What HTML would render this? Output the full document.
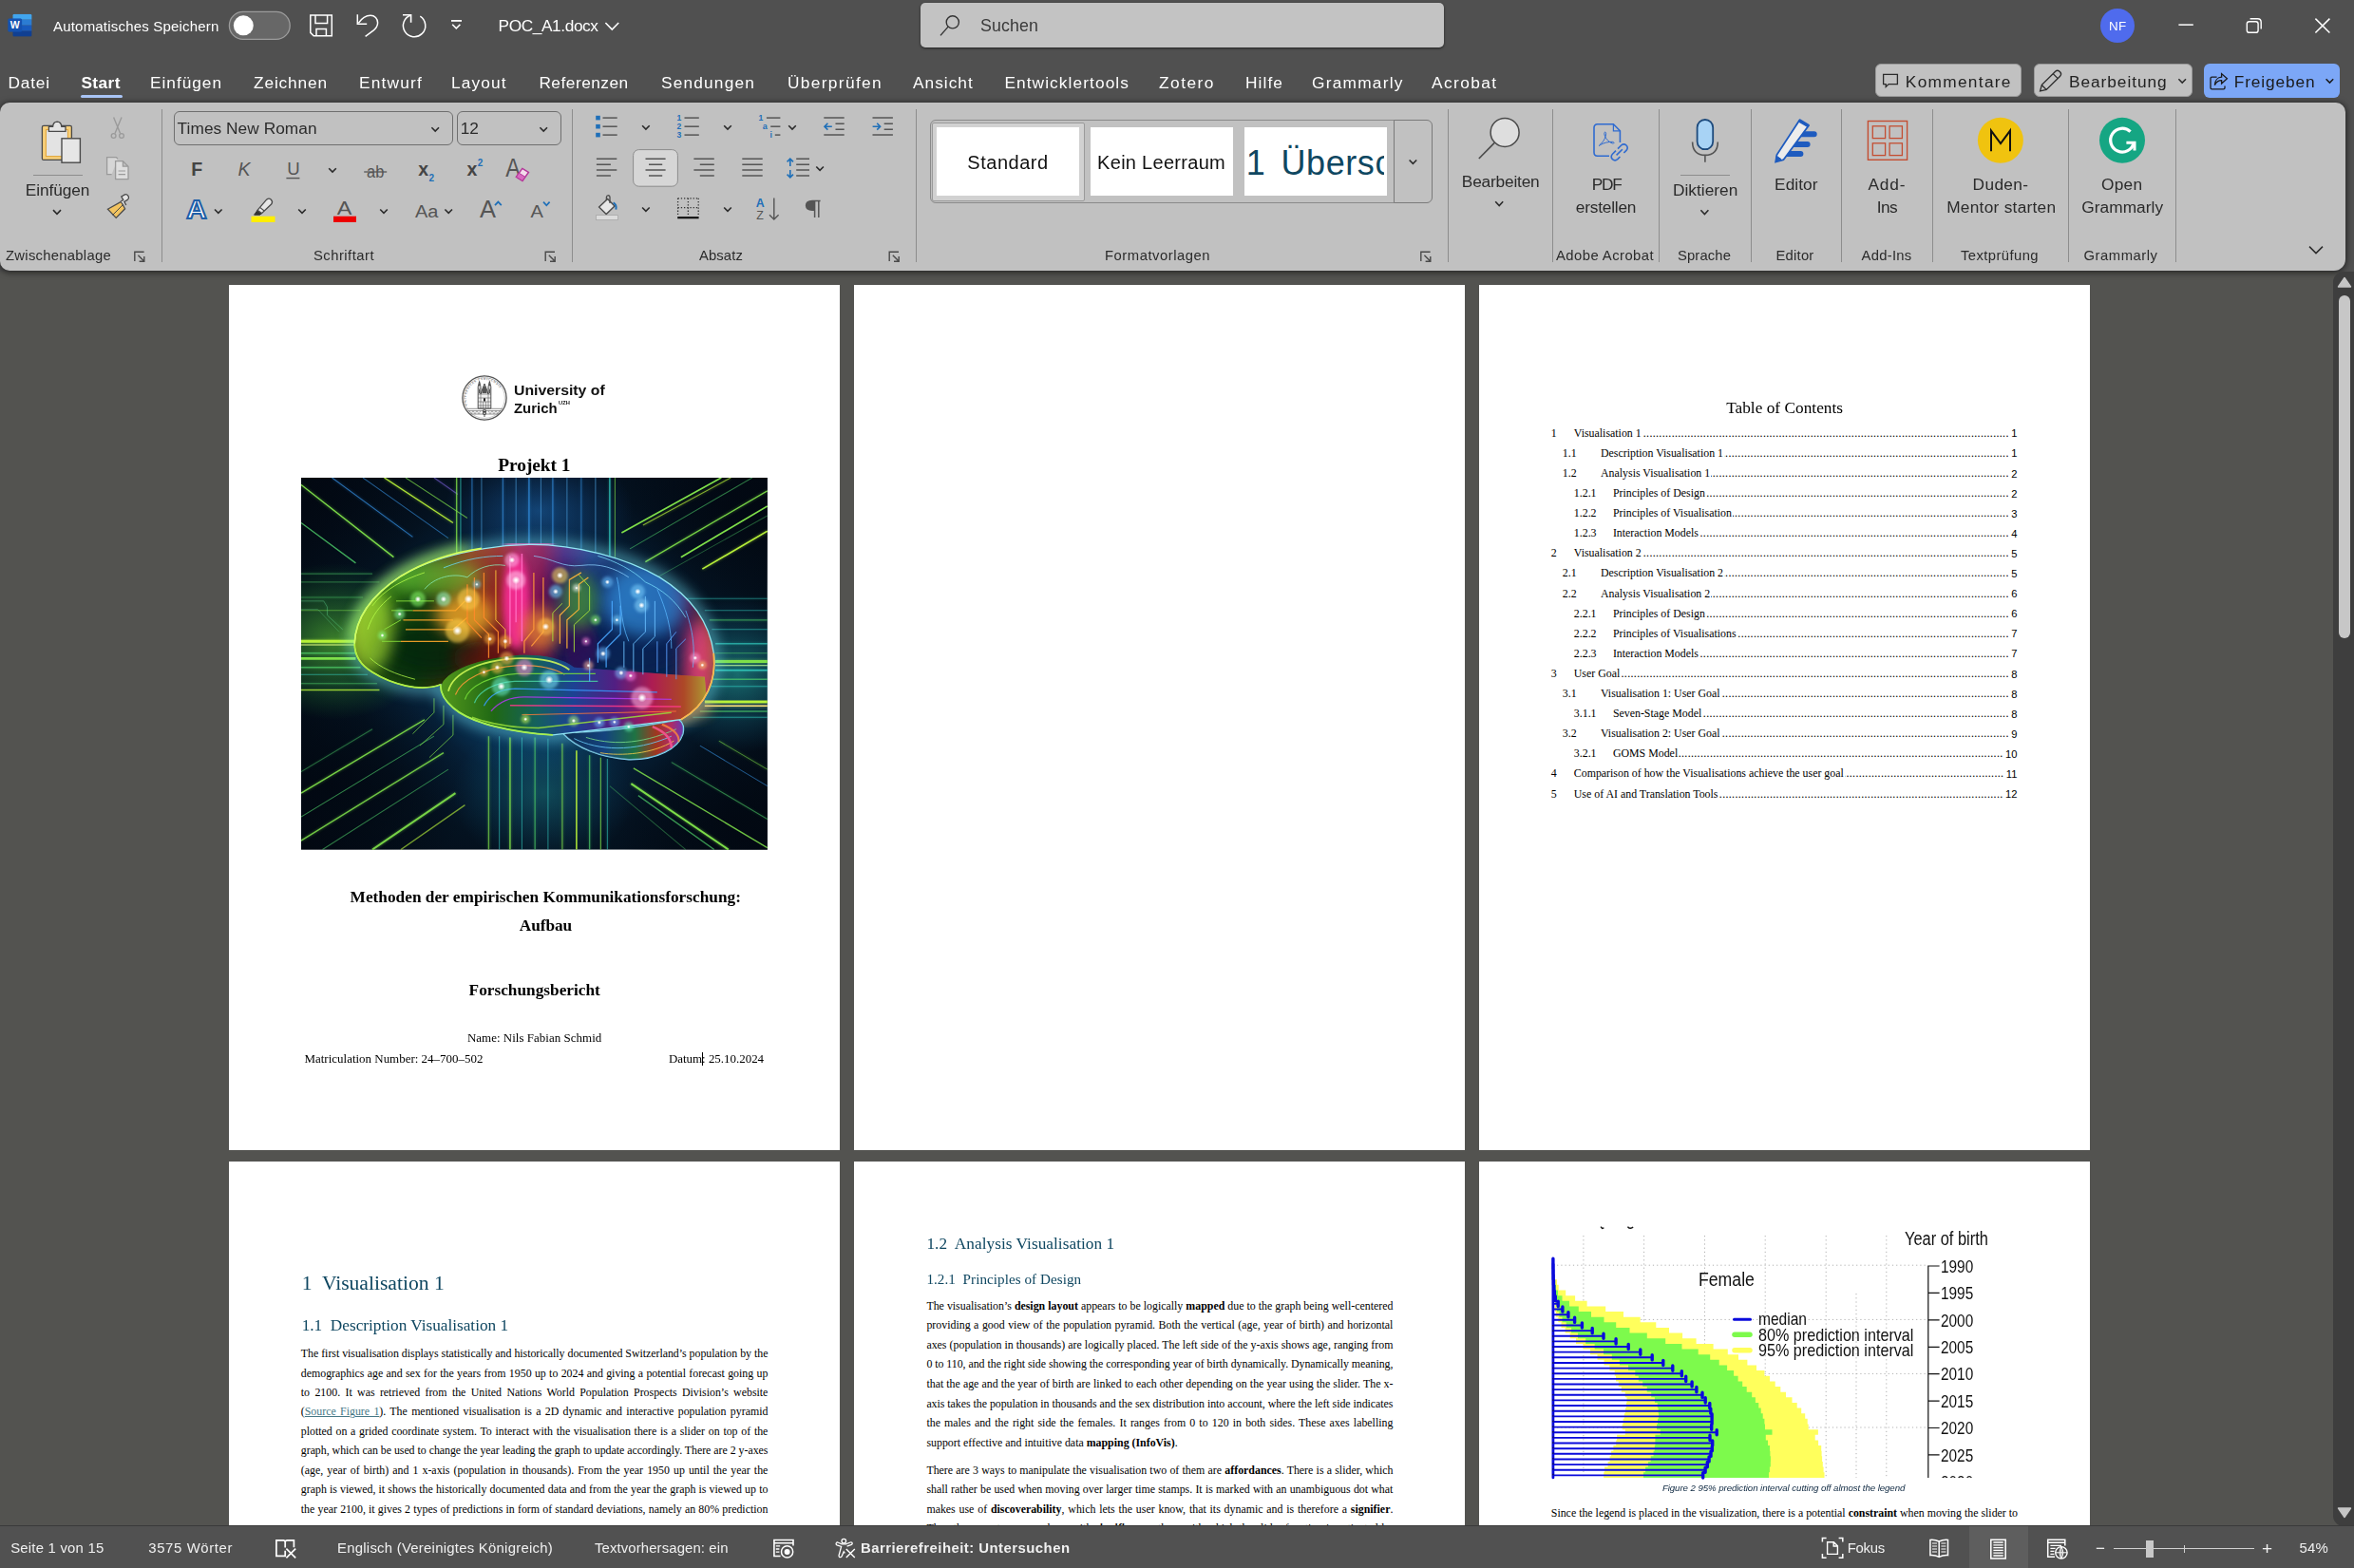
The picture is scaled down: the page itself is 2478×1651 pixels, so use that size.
<!DOCTYPE html><html><head><meta charset="utf-8"><title>POC_A1.docx - Word</title><style>

html,body{margin:0;padding:0;}
body{width:2478px;height:1651px;overflow:hidden;position:relative;background:#535350;font-family:"Liberation Sans",sans-serif;}
.a{position:absolute;}
.t{position:absolute;white-space:pre;line-height:1;}
.pg{position:absolute;background:#fff;overflow:hidden;}
.ln{position:absolute;white-space:nowrap;font-family:"Liberation Serif",serif;color:#000;line-height:1;text-align:justify;text-align-last:justify;}

</style></head><body>
<div class="a" style="left:0px;top:0px;width:2478px;height:286px;background:#505050;"></div>
<div class="a" style="left:0px;top:108px;width:2469px;height:177px;background:#c1c1c1;border-radius:10px 10px 12px 10px;box-shadow:0 1px 6px 1px rgba(0,0,0,.55);"></div>
<div class="a" style="left:968.8px;top:3.2px;width:551.6px;height:47.2px;background:#c3c3c3;border-radius:5px;box-shadow:0 1px 2.5px rgba(0,0,0,.6);"></div>
<div class="a" style="left:2211px;top:8.8px;width:36.2px;height:36.2px;background:#4f6bed;border-radius:50%;"></div>
<div class="a" style="left:85.4px;top:100.3px;width:43.2px;height:3px;background:#a9c4f5;border-radius:1.5px;"></div>
<div class="a" style="left:1974.3px;top:67.3px;width:153.4px;height:35.2px;background:#c1c1c1;border-radius:6px;border:1px solid #9a9a9a;box-sizing:border-box;"></div>
<div class="a" style="left:2140.5px;top:67.3px;width:167.2px;height:35.2px;background:#c1c1c1;border-radius:6px;border:1px solid #9a9a9a;box-sizing:border-box;"></div>
<div class="a" style="left:2320.3px;top:67px;width:143px;height:35.8px;background:#7ca7f7;border-radius:6px;"></div>
<div class="a" style="left:170.0px;top:115px;width:1px;height:161px;background:#8d8d8d;"></div>
<div class="a" style="left:601.5px;top:115px;width:1px;height:161px;background:#8d8d8d;"></div>
<div class="a" style="left:963.5px;top:115px;width:1px;height:161px;background:#8d8d8d;"></div>
<div class="a" style="left:1524.0px;top:115px;width:1px;height:161px;background:#8d8d8d;"></div>
<div class="a" style="left:1633.9px;top:115px;width:1px;height:161px;background:#8d8d8d;"></div>
<div class="a" style="left:1746.0px;top:115px;width:1px;height:161px;background:#8d8d8d;"></div>
<div class="a" style="left:1842.5px;top:115px;width:1px;height:161px;background:#8d8d8d;"></div>
<div class="a" style="left:1937.9px;top:115px;width:1px;height:161px;background:#8d8d8d;"></div>
<div class="a" style="left:2034.1px;top:115px;width:1px;height:161px;background:#8d8d8d;"></div>
<div class="a" style="left:2177.2px;top:115px;width:1px;height:161px;background:#8d8d8d;"></div>
<div class="a" style="left:2289.5px;top:115px;width:1px;height:161px;background:#8d8d8d;"></div>
<div class="a" style="left:35px;top:183.5px;width:52px;height:1px;background:#8d8d8d;"></div>
<div class="a" style="left:182.8px;top:117px;width:294px;height:35.8px;border:1px solid #6f6f6f;border-radius:6px;box-sizing:border-box;"></div>
<div class="a" style="left:480.5px;top:117px;width:110.5px;height:35.8px;border:1px solid #6f6f6f;border-radius:6px;box-sizing:border-box;"></div>
<div class="a" style="left:1769px;top:183.9px;width:51.8px;height:1px;background:#8d8d8d;"></div>
<div class="a" style="left:979px;top:125.6px;width:489px;height:88.7px;border:1px solid #8a8a8a;border-radius:6px 0 0 6px;box-sizing:border-box;"></div>
<div class="a" style="left:1467.2px;top:125.6px;width:41px;height:88.7px;border:1px solid #7a7a7a;border-radius:0 6px 6px 0;box-sizing:border-box;"></div>
<div class="a" style="left:980.7px;top:128.7px;width:161.1px;height:83.3px;background:#d1d1d1;border:1px solid #9a9a9a;border-radius:2px;box-sizing:border-box;"></div>
<div class="a" style="left:986.2px;top:134.2px;width:149.8px;height:72px;background:#fff;"></div>
<div class="a" style="left:1147.9px;top:134.2px;width:150.4px;height:72px;background:#fff;"></div>
<div class="a" style="left:1310.2px;top:134.2px;width:149.8px;height:72px;background:#fff;"></div>
<div class="a" style="left:1310.2px;top:134.2px;width:146.5px;height:71.3px;overflow:hidden;"><span class="t" style='left:1.6px;top:19.8px;font-family:"Liberation Sans",sans-serif;font-size:36px;color:#0f4761;letter-spacing:0.6px;word-spacing:-2.6px;'>1&nbsp; Überschrift</span></div>
<svg class="a" style="left:0;top:0;" width="2478" height="286" viewBox="0 0 2478 286"><defs><clipPath id="wpg"><rect x="13.3" y="14.7" width="20.3" height="23.8" rx="1.6"/></clipPath></defs><g clip-path="url(#wpg)"><rect x="13.3" y="14.7" width="20.3" height="6" fill="#41a5ee"/><rect x="13.3" y="20.7" width="20.3" height="6" fill="#2b7cd3"/><rect x="13.3" y="26.7" width="20.3" height="6" fill="#185abd"/><rect x="13.3" y="32.7" width="20.3" height="6" fill="#103f91"/></g><rect x="8.4" y="19.6" width="14.7" height="14" rx="1.5" fill="#185abd"/><rect x="8.4" y="19.6" width="14.7" height="14" rx="1.5" fill="#0a3a8a" opacity=".25"/><text x="15.75" y="30.4" font-family="Liberation Sans, sans-serif" font-size="10.5" fill="#fff" font-weight="700" font-style="normal" text-anchor="middle" >W</text><rect x="241.4" y="12.4" width="63.8" height="29" rx="14.5" fill="#676767" stroke="#9c9c9c" stroke-width="1.3"/><circle cx="256.3" cy="26.8" r="10.5" fill="#fff"/><path d="M326.8 16H349.3V37.8H330.2L326.8 34.4Z M332 16V24.6H344.6V16 M333 37.8V30.6H343.4V37.8" stroke="#fff" stroke-width="1.5" fill="none" /><path d="M376.3 15.3V25.2H386.2" stroke="#fff" stroke-width="1.5" fill="none" /><path d="M377.3 24.4C381 18.8 386 16.2 390 16.2C394.5 16.2 397.6 19.6 397.6 24C397.6 27.6 395.6 30 393 32.2L384.6 38.3" stroke="#fff" stroke-width="1.5" fill="none" /><path d="M424 15.7H432.6V23.8" stroke="#fff" stroke-width="1.6" fill="none" /><path d="M442.3 17.2A11.66 11.66 0 1 1 432.5 16" stroke="#fff" stroke-width="1.5" fill="none" /><path d="M475 21.9H486" stroke="#fff" stroke-width="1.8" fill="none" /><path d="M476.2 25.7L480.3 29.8L484.4 25.7" stroke="#fff" stroke-width="1.6" fill="none" /><path d="M637.4 24L644.3 31L651.2 24" stroke="#fff" stroke-width="1.6" fill="none" /><path d="M998.1 28.1L990 37.4" stroke="#333" stroke-width="1.4" fill="none" /><circle cx="1002.8" cy="23.3" r="6.6" fill="none" stroke="#333" stroke-width="1.4"/><path d="M2293.4 26.1H2308.8" stroke="#fff" stroke-width="1.5" fill="none" /><rect x="2365.3" y="22.7" width="11.8" height="11.6" rx="2.4" fill="none" stroke="#fff" stroke-width="1.4"/><path d="M2368.6 19.7H2376.6Q2380.2 19.7 2380.2 23.3V30.6" stroke="#fff" stroke-width="1.4" fill="none" /><path d="M2437.4 19.6L2452.4 34.5M2452.4 19.6L2437.4 34.5" stroke="#fff" stroke-width="1.5" fill="none" /><path d="M1982.6 78.3H1997.4V88.6H1988.2L1985.2 91.4V88.6H1982.6Z" stroke="#2b2b2b" stroke-width="1.3" fill="none" /><path d="M2147.6 95.8L2149.4 89.4L2163.6 75.2Q2165.8 73.2 2168 75.2L2168.8 76Q2170.6 78.2 2168.6 80.2L2154.2 94.4Z M2161.2 77.6L2166.2 82.6 M2149.4 89.6L2154 94.2" stroke="#2b2b2b" stroke-width="1.3" fill="none" /><path d="M2293.3999999999996 83.3L2297.2 87.10000000000001L2301.0 83.3" stroke="#2b2b2b" stroke-width="1.5" fill="none" /><path d="M2333.6 81.2H2328.4Q2327 81.2 2327 82.6V92.4Q2327 93.8 2328.4 93.8H2340.6Q2342 93.8 2342 92.4V90.6 M2331.4 89.6C2331.6 84.6 2334.6 81.4 2338.6 81.2V77.6L2344.4 82.8L2338.6 88V84.6C2335.6 84.6 2333 86.2 2331.4 89.6Z" stroke="#1a1a1a" stroke-width="1.3" fill="none" /><path d="M2448.6 83.3L2452.4 87.10000000000001L2456.2000000000003 83.3" stroke="#1a1a1a" stroke-width="1.5" fill="none" /><rect x="44.4" y="132.4" width="31" height="36" rx="1.5" fill="#f7cf7a" stroke="#4a4a4a" stroke-width="1.3"/><rect x="48.4" y="136.6" width="23" height="28" fill="#e3e3e3" stroke="#e0a436" stroke-width="1"/><path d="M51.4 138.4V133.4H55.6Q56 128.4 60.2 128.2Q64.4 128.4 64.8 133.4H69V138.4Z" stroke="#4a4a4a" stroke-width="1.3" fill="#e3e3e3" /><rect x="65" y="145.8" width="19.4" height="25.4" fill="#e6e6e6" stroke="#4a4a4a" stroke-width="1.4"/><path d="M56 221.1L60 225.29999999999998L64 221.1" stroke="#2b2b2b" stroke-width="1.6" fill="none" /><path d="M119.6 123.6L126.6 140.6M128 123.6L121 140.6" stroke="#9a9a9a" stroke-width="1.4" fill="none" /><circle cx="119.6" cy="143" r="2.4" fill="none" stroke="#9a9a9a" stroke-width="1.3"/><circle cx="128" cy="143" r="2.4" fill="none" stroke="#9a9a9a" stroke-width="1.3"/><path d="M117.6 183.6H112.6V165.6H122.4L124 167.2" stroke="#9a9a9a" stroke-width="1.3" fill="#d6d6d6" /><path d="M121.6 169.6H129.4L135 175.2V188.6H121.6Z M129.4 169.6V175.2H135" stroke="#9a9a9a" stroke-width="1.3" fill="#dedede" /><path d="M124.6 180H132M124.6 183.6H132" stroke="#9a9a9a" stroke-width="1.2" fill="none" /><path d="M113.4 220.2L127.4 212.4L131.6 219.8L122.2 229.4Z" stroke="#4a4a4a" stroke-width="1.3" fill="#f3c460" /><path d="M118.6 226.4L129.4 215.6" stroke="#4a4a4a" stroke-width="1" fill="none" /><path d="M127 212.2L129.8 210.6L127.8 207L131.4 204.9Q133.4 204 134.6 205.8L135.4 207.3Q136 209.4 134.2 210.4L130.8 212.4L132.8 216" stroke="#4a4a4a" stroke-width="1.3" fill="#e3e3e3" /><path d="M151.6 265.2H141.8V275.0" stroke="#4a4a4a" stroke-width="1.4" fill="none" /><path d="M145.4 268.79999999999995L151.4 274.79999999999995M151.8 270.0V275.2H146.6" stroke="#4a4a4a" stroke-width="1.4" fill="none" /><path d="M584.0 265.2H574.1999999999999V275.0" stroke="#4a4a4a" stroke-width="1.4" fill="none" /><path d="M577.8 268.79999999999995L583.8 274.79999999999995M584.1999999999999 270.0V275.2H579.0" stroke="#4a4a4a" stroke-width="1.4" fill="none" /><path d="M946.0 265.2H936.1999999999999V275.0" stroke="#4a4a4a" stroke-width="1.4" fill="none" /><path d="M939.8 268.79999999999995L945.8 274.79999999999995M946.1999999999999 270.0V275.2H941.0" stroke="#4a4a4a" stroke-width="1.4" fill="none" /><path d="M1505.6 265.2H1495.8V275.0" stroke="#4a4a4a" stroke-width="1.4" fill="none" /><path d="M1499.4 268.79999999999995L1505.4 274.79999999999995M1505.8 270.0V275.2H1500.6" stroke="#4a4a4a" stroke-width="1.4" fill="none" /><path d="M454.4 134.29999999999998L458.2 138.1L462.0 134.29999999999998" stroke="#2b2b2b" stroke-width="1.6" fill="none" /><path d="M568.4000000000001 134.29999999999998L572.2 138.1L576.0 134.29999999999998" stroke="#2b2b2b" stroke-width="1.6" fill="none" /><text x="201.3" y="184.8" font-family="Liberation Sans, sans-serif" font-size="19.6" fill="#444" font-weight="700" font-style="normal" text-anchor="start" >F</text><text x="250.6" y="184.8" font-family="Liberation Sans, sans-serif" font-size="19.6" fill="#555" font-weight="400" font-style="italic" text-anchor="start" >K</text><text x="302.2" y="184.4" font-family="Liberation Sans, sans-serif" font-size="18.6" fill="#555" font-weight="400" font-style="normal" text-anchor="start" >U</text><path d="M301.4 187.6H315.4" stroke="#555" stroke-width="1.4" fill="none" /><path d="M346.2 177.29999999999998L350 181.1L353.8 177.29999999999998" stroke="#2b2b2b" stroke-width="1.6" fill="none" /><text x="386" y="187" font-family="Liberation Sans, sans-serif" font-size="17.5" fill="#555" font-weight="400" font-style="normal" text-anchor="start" textLength="18.3" lengthAdjust="spacingAndGlyphs">ab</text><path d="M383.2 181H407.2" stroke="#555" stroke-width="1.3" fill="none" /><text x="440.2" y="184.8" font-family="Liberation Sans, sans-serif" font-size="19.5" fill="#444" font-weight="700" font-style="normal" text-anchor="start" >x</text><text x="451.4" y="191.4" font-family="Liberation Sans, sans-serif" font-size="10" fill="#1e6fb8" font-weight="700" font-style="normal" text-anchor="start" >2</text><text x="491.4" y="184.8" font-family="Liberation Sans, sans-serif" font-size="19.5" fill="#444" font-weight="700" font-style="normal" text-anchor="start" >x</text><text x="502.8" y="174.8" font-family="Liberation Sans, sans-serif" font-size="10" fill="#1e6fb8" font-weight="700" font-style="normal" text-anchor="start" >2</text><text x="532.2" y="186.4" font-family="Liberation Sans, sans-serif" font-size="27" fill="#555" font-weight="400" font-style="normal" text-anchor="start" textLength="15.6" lengthAdjust="spacingAndGlyphs">A</text><path d="M549.8 177.4L556.4 181.4L550 190.4L543.4 186.4Z" stroke="#b4379a" stroke-width="1.5" fill="#f4dcec" /><path d="M546.2 182.2L552.8 186.2L550 190.4L543.4 186.4Z" stroke="#b4379a" stroke-width="1" fill="#d86ac0" /><text x="196.2" y="230.4" font-family="Liberation Sans, sans-serif" font-size="27" font-weight="700" fill="#fff" stroke="#1f5fa8" stroke-width="1.9" textLength="21.4" lengthAdjust="spacingAndGlyphs">A</text><path d="M226.0 220.5L229.8 224.3L233.60000000000002 220.5" stroke="#2b2b2b" stroke-width="1.6" fill="none" /><path d="M267.6 226.2L271 221.4L275.4 224.6L273.6 226.2Z" stroke="#333" stroke-width="1" fill="#333" /><path d="M271 221.4L280.6 210.2Q283 208 285.4 210.2Q287.6 212.6 285.6 215L275.4 224.6Z" stroke="#4a4a4a" stroke-width="1.3" fill="#e6e6e6" /><path d="M273.6 218.4L278.2 222" stroke="#4a4a4a" stroke-width="1.1" fill="none" /><rect x="264.5" y="227.7" width="25" height="6.2" fill="#ffef00"/><path d="M314.2 220.5L318 224.3L321.8 220.5" stroke="#2b2b2b" stroke-width="1.6" fill="none" /><text x="354.8" y="226" font-family="Liberation Sans, sans-serif" font-size="21" fill="#555" font-weight="400" font-style="normal" text-anchor="start" textLength="15.6" lengthAdjust="spacingAndGlyphs">A</text><rect x="351" y="227.7" width="24" height="6.2" fill="#ee0000"/><path d="M400.2 220.5L404 224.3L407.8 220.5" stroke="#2b2b2b" stroke-width="1.6" fill="none" /><text x="437" y="229" font-family="Liberation Sans, sans-serif" font-size="18.8" fill="#555" font-weight="400" font-style="normal" text-anchor="start" textLength="24.4" lengthAdjust="spacingAndGlyphs">Aa</text><path d="M468.4 220.5L472.2 224.3L476.0 220.5" stroke="#2b2b2b" stroke-width="1.6" fill="none" /><text x="505" y="229" font-family="Liberation Sans, sans-serif" font-size="25.2" fill="#555" font-weight="400" font-style="normal" text-anchor="start" textLength="17" lengthAdjust="spacingAndGlyphs">A</text><path d="M521 216.2L524.4 212.6L527.8 216.2" stroke="#1e6fb8" stroke-width="1.7" fill="none" /><text x="558.6" y="229" font-family="Liberation Sans, sans-serif" font-size="18.8" fill="#555" font-weight="400" font-style="normal" text-anchor="start" textLength="13.4" lengthAdjust="spacingAndGlyphs">A</text><path d="M572 212.6L575.3 216.2L578.6 212.6" stroke="#1e6fb8" stroke-width="1.7" fill="none" /><rect x="627.2" y="121.8" width="4.6" height="4.6" fill="#1e6fb8"/><path d="M634.5 124.1H649.7" stroke="#555" stroke-width="1.5" fill="none" /><path d="M720.5 124.1H735.8" stroke="#555" stroke-width="1.5" fill="none" /><rect x="627.2" y="130.89999999999998" width="4.6" height="4.6" fill="#1e6fb8"/><path d="M634.5 133.2H649.7" stroke="#555" stroke-width="1.5" fill="none" /><path d="M720.5 133.2H735.8" stroke="#555" stroke-width="1.5" fill="none" /><rect x="627.2" y="139.79999999999998" width="4.6" height="4.6" fill="#1e6fb8"/><path d="M634.5 142.1H649.7" stroke="#555" stroke-width="1.5" fill="none" /><path d="M720.5 142.1H735.8" stroke="#555" stroke-width="1.5" fill="none" /><path d="M676.1 132.29999999999998L679.9 136.1L683.6999999999999 132.29999999999998" stroke="#2b2b2b" stroke-width="1.6" fill="none" /><text x="712.6" y="127.19999999999999" font-family="Liberation Sans, sans-serif" font-size="8.6" fill="#1e6fb8" font-weight="700" font-style="normal" text-anchor="start" >1</text><text x="712.6" y="136.29999999999998" font-family="Liberation Sans, sans-serif" font-size="8.6" fill="#1e6fb8" font-weight="700" font-style="normal" text-anchor="start" >2</text><text x="712.6" y="145.2" font-family="Liberation Sans, sans-serif" font-size="8.6" fill="#1e6fb8" font-weight="700" font-style="normal" text-anchor="start" >3</text><path d="M762.2 132.29999999999998L766 136.1L769.8 132.29999999999998" stroke="#2b2b2b" stroke-width="1.6" fill="none" /><text x="798.6" y="127.2" font-family="Liberation Sans, sans-serif" font-size="8.6" fill="#1e6fb8" font-weight="700" font-style="normal" text-anchor="start" >1</text><path d="M806.9 124.1H821.4" stroke="#555" stroke-width="1.5" fill="none" /><text x="802.8" y="136.4" font-family="Liberation Sans, sans-serif" font-size="9" fill="#1e6fb8" font-weight="700" font-style="normal" text-anchor="start" >a</text><path d="M811.2 133.2H821.4" stroke="#555" stroke-width="1.5" fill="none" /><text x="810.6" y="145.4" font-family="Liberation Sans, sans-serif" font-size="8.6" fill="#1e6fb8" font-weight="700" font-style="normal" text-anchor="start" >i</text><path d="M815.8 142.1H821.4" stroke="#555" stroke-width="1.5" fill="none" /><path d="M830.2 132.29999999999998L834 136.1L837.8 132.29999999999998" stroke="#2b2b2b" stroke-width="1.6" fill="none" /><path d="M867.3 124.1H888.7M867.3 142.1H888.7M879.5 130.3H888.7M879.5 136.2H888.7" stroke="#555" stroke-width="1.5" fill="none" /><path d="M875.8 133.2H868M871.4 129.8L868 133.2L871.4 136.6" stroke="#1e6fb8" stroke-width="1.6" fill="none" /><path d="M918.5 124.1H939.9M918.5 142.1H939.9M930.7 130.3H939.9M930.7 136.2H939.9" stroke="#555" stroke-width="1.5" fill="none" /><path d="M918.6 133.2H926.6M923.2 129.8L926.6 133.2L923.2 136.6" stroke="#1e6fb8" stroke-width="1.6" fill="none" /><path d="M627.9 167.3H649.3M627.9 173.2H642.9M627.9 179.1H649.3M627.9 184.9H642.9" stroke="#555" stroke-width="1.5" fill="none" /><rect x="666.6" y="157.6" width="46.8" height="38.6" rx="6" fill="#d6d6d6" stroke="#8c8c8c" stroke-width="1"/><path d="M679.5 167.3H700.6M683 173.2H697.2M679.5 179.1H700.6M683 184.9H697.2" stroke="#555" stroke-width="1.5" fill="none" /><path d="M730.4 167.3H751.8M736.8 173.2H751.8M730.4 179.1H751.8M736.8 184.9H751.8" stroke="#555" stroke-width="1.5" fill="none" /><path d="M781.3 167.3H802.7M781.3 173.2H802.7M781.3 179.1H802.7M781.3 184.9H802.7" stroke="#555" stroke-width="1.5" fill="none" /><path d="M838.2 167.3H852M838.2 173.2H852M838.2 179.1H852M838.2 184.9H852" stroke="#555" stroke-width="1.5" fill="none" /><path d="M831.8 167.4V175M828.6 170.4L831.8 167.2L835 170.4M831.8 179V186.8M828.6 183.6L831.8 186.8L835 183.6" stroke="#1e6fb8" stroke-width="1.6" fill="none" /><path d="M859.3000000000001 175.5L863.1 179.3L866.9 175.5" stroke="#2b2b2b" stroke-width="1.6" fill="none" /><path d="M630.6 218L639.6 209.4L647 217L638.2 225.6Z" stroke="#4a4a4a" stroke-width="1.4" fill="#e8e8e8" /><path d="M638.4 211V207.6Q638.6 205.6 640.4 205.6Q642 205.8 642 207.6V214" stroke="#4a4a4a" stroke-width="1.3" fill="none" /><path d="M645.6 213.4Q649.4 215.4 648.4 220.6" stroke="#1e6fb8" stroke-width="2" fill="none" /><rect x="627.6" y="226.6" width="23" height="5" fill="#dcdcdc" stroke="#a8a8a8" stroke-width=".8"/><path d="M676.1 218.5L679.9 222.3L683.6999999999999 218.5" stroke="#2b2b2b" stroke-width="1.6" fill="none" /><path d="M713.6 208.8H735.2M713.6 208.8V228M735.2 208.8V228M724.4 208.8V228M713.6 218.6H735.2" stroke="#333" stroke-width="1.3" fill="none" stroke-dasharray="1.3 1.9"/><path d="M713.2 229.2H735.6" stroke="#111" stroke-width="2.2" fill="none" /><path d="M762.2 218.5L766 222.3L769.8 218.5" stroke="#2b2b2b" stroke-width="1.6" fill="none" /><text x="795.8" y="217.8" font-family="Liberation Sans, sans-serif" font-size="12.4" fill="#1e6fb8" font-weight="700" font-style="normal" text-anchor="start" >A</text><text x="796.2" y="231.3" font-family="Liberation Sans, sans-serif" font-size="12.4" fill="#555" font-weight="400" font-style="normal" text-anchor="start" >Z</text><path d="M814.8 208.6V231M810 226.2L814.8 231L819.6 226.2" stroke="#555" stroke-width="1.4" fill="none" /><path d="M857.6 211.4V229M861.8 211.4V229M863.6 211.4H855Q848.6 211.6 848.6 216.4Q848.8 221 855 221.2H857.6" stroke="#555" stroke-width="1.5" fill="none" /><path d="M857.6 211.4H855Q848.6 211.6 848.6 216.4Q848.8 221 855 221.2H857.6Z" stroke="#555" stroke-width="0" fill="#555" /><path d="M1483.6000000000001 168.5L1487.4 172.3L1491.2 168.5" stroke="#2b2b2b" stroke-width="1.6" fill="none" /><path d="M2431 259.6L2438 266.6L2445 259.6" stroke="#2b2b2b" stroke-width="1.5" fill="none" /><circle cx="1584.1" cy="139.4" r="15" fill="#dedede" stroke="#4a4a4a" stroke-width="1.5"/><path d="M1573.2 150.4L1556.8 167" stroke="#4a4a4a" stroke-width="1.6" fill="none" /><path d="M1574.2 212.3L1578.2 216.5L1582.2 212.3" stroke="#2b2b2b" stroke-width="1.6" fill="none" /><path d="M1684.2 130.8H1698.4L1705.4 137.8V150 M1694 164.2H1681.6Q1678 164 1678 160.4V134.4Q1678.2 131 1681.6 130.8H1684.2" stroke="#2f6bd0" stroke-width="1.6" fill="none" /><path d="M1698.4 130.8V137.8H1705.4" stroke="#2f6bd0" stroke-width="1.2" fill="none" /><path d="M1684 152.4C1688 149.6 1690.6 144.2 1690.6 140.4C1690.4 138.6 1688.8 138.8 1688.8 140.4C1689 144.6 1693 149.6 1697.6 151C1699.4 151.4 1699.6 149.6 1697.6 149.4C1693 149 1687.8 150.6 1684.2 152.8C1682.8 153.8 1683.4 154.4 1684 152.4Z" stroke="#2f6bd0" stroke-width="1" fill="none" /><path d="M1703 156.6L1706.6 153Q1709.4 150.6 1712 153Q1714.4 155.6 1712 158.4L1709.4 161M1705.4 165L1702.8 167.6Q1700 170 1697.4 167.6Q1695 165 1697.4 162.2L1701 158.6 M1701.6 163.4L1707.8 157.2" stroke="#2f6bd0" stroke-width="1.6" fill="none" /><rect x="1786.6" y="126" width="16.6" height="31.2" rx="8.3" fill="#a8d3f5" stroke="#1d4a7c" stroke-width="1.8"/><path d="M1781.6 149.4Q1781.8 163.2 1794.9 163.4Q1808.2 163.2 1808.3 149.4M1794.9 163.4V170.8" stroke="#555" stroke-width="1.6" fill="none" /><path d="M1790.4 221.3L1794.4 225.5L1798.4 221.3" stroke="#2b2b2b" stroke-width="1.6" fill="none" /><path d="M1894 141.2H1909.7M1886 151.9H1902.6M1878 162.1H1895.4" stroke="#1e5bbf" stroke-width="6" fill="none" stroke-linecap="round"/><path d="M1869.2 170.6L1870.4 163L1894 127L1903.7 132.6L1877.4 168.2Z" stroke="#1e5bbf" stroke-width="1.8" fill="#ececec" /><path d="M1893.6 126.6L1904 132.8" stroke="#1e5bbf" stroke-width="3.6" fill="none" /><path d="M1869.2 170.6L1870.2 164.2L1875 167.6Z" stroke="#1e5bbf" stroke-width="1" fill="#1e5bbf" /><rect x="1966.4" y="127.5" width="41.2" height="40.8" fill="none" stroke="#c44e32" stroke-width="1.4"/><rect x="1971.3" y="132.8" width="13.3" height="12.8" fill="none" stroke="#c44e32" stroke-width="1.3"/><rect x="1971.3" y="150.8" width="13.3" height="12.8" fill="none" stroke="#c44e32" stroke-width="1.3"/><rect x="1989.1" y="132.8" width="13.3" height="12.8" fill="none" stroke="#c44e32" stroke-width="1.3"/><rect x="1989.1" y="150.8" width="13.3" height="12.8" fill="none" stroke="#c44e32" stroke-width="1.3"/><circle cx="2105.9" cy="147.8" r="24" fill="#f0c30f"/><path d="M2096 159.2V137.6L2106 151L2116 137.6V159.2" stroke="#111" stroke-width="2" fill="none" stroke-linejoin="miter"/><circle cx="2234" cy="147.8" r="24" fill="#15a683"/><path d="M2242.6 138.6A12.4 12.4 0 1 0 2246.2 150.4" stroke="#fff" stroke-width="3.2" fill="none" /><path d="M2238.4 150.2H2247V158.6" stroke="#fff" stroke-width="3" fill="none" /></svg>
<div class="a" style="left:240.5px;top:299.5px;width:643px;height:911px;background:#fff;"></div>
<div class="a" style="left:898.8px;top:299.5px;width:643px;height:911px;background:#fff;"></div>
<div class="a" style="left:1557px;top:299.5px;width:643px;height:911px;background:#fff;"></div>
<div class="a" style="left:240.5px;top:1222.6px;width:643px;height:384px;background:#fff;"></div>
<div class="a" style="left:898.8px;top:1222.6px;width:643px;height:384px;background:#fff;"></div>
<div class="a" style="left:1557px;top:1222.6px;width:643px;height:384px;background:#fff;"></div>
<div class="a" style="left:739.2px;top:1107.5px;width:1px;height:14.5px;background:#000;"></div>
<svg class="a" style="left:317.1px;top:503.3px;" width="490.8" height="391.55" viewBox="0 0 1964 1568" preserveAspectRatio="none"><defs>
<radialGradient id="bbg" cx="1000" cy="780" r="1250" gradientUnits="userSpaceOnUse">
<stop offset="0" stop-color="#0e5f96"/><stop offset="0.2" stop-color="#0a416b"/><stop offset="0.4" stop-color="#062038"/><stop offset="0.62" stop-color="#041220"/><stop offset="1" stop-color="#020811"/></radialGradient>
<radialGradient id="gl" cx="0.5" cy="0.5" r="0.5"><stop offset="0" stop-color="#7dff3a" stop-opacity=".85"/><stop offset="1" stop-color="#2bd04a" stop-opacity="0"/></radialGradient>
<radialGradient id="gr" cx="0.5" cy="0.5" r="0.5"><stop offset="0" stop-color="#35e6d8" stop-opacity=".7"/><stop offset="1" stop-color="#1a9ad0" stop-opacity="0"/></radialGradient>
<radialGradient id="gt" cx="0.5" cy="0.5" r="0.5"><stop offset="0" stop-color="#2a8cf0" stop-opacity=".75"/><stop offset="1" stop-color="#1a60c0" stop-opacity="0"/></radialGradient>
<radialGradient id="gd" cx="0.5" cy="0.5" r="0.5"><stop offset="0" stop-color="#020812" stop-opacity=".9"/><stop offset="1" stop-color="#020812" stop-opacity="0"/></radialGradient>
<linearGradient id="brn" x1="225" x2="1745" y1="0" y2="0" gradientUnits="userSpaceOnUse">
<stop offset="0" stop-color="#b6f22a"/><stop offset="0.06" stop-color="#58c21a"/><stop offset="0.17" stop-color="#2f8a12"/><stop offset="0.26" stop-color="#7a6a12"/><stop offset="0.32" stop-color="#d8621a"/>
<stop offset="0.40" stop-color="#e8382e"/><stop offset="0.46" stop-color="#ff2a86"/><stop offset="0.52" stop-color="#d11e7e"/><stop offset="0.58" stop-color="#6a38c8"/><stop offset="0.66" stop-color="#2c6ee0"/>
<stop offset="0.76" stop-color="#2a8ae8"/><stop offset="0.86" stop-color="#2a62c4"/><stop offset="0.93" stop-color="#c43a86"/><stop offset="0.975" stop-color="#ff7a3a"/><stop offset="1" stop-color="#ffe04a"/></linearGradient>
<linearGradient id="shade" x1="0" x2="0" y1="280" y2="1190" gradientUnits="userSpaceOnUse">
<stop offset="0" stop-color="#fff" stop-opacity=".18"/><stop offset="0.25" stop-color="#000" stop-opacity=".05"/><stop offset="0.6" stop-color="#000" stop-opacity=".38"/><stop offset="1" stop-color="#000" stop-opacity=".2"/></linearGradient>
<linearGradient id="tmp" x1="590" x2="1700" y1="0" y2="0" gradientUnits="userSpaceOnUse">
<stop offset="0" stop-color="#7be02a"/><stop offset="0.2" stop-color="#2f9a1e"/><stop offset="0.36" stop-color="#1e8f8a"/><stop offset="0.5" stop-color="#2a62d8"/><stop offset="0.66" stop-color="#7a2ec0"/><stop offset="0.8" stop-color="#ff2a7a"/><stop offset="0.92" stop-color="#ff6a3a"/><stop offset="1" stop-color="#ffd84a"/></linearGradient>
<linearGradient id="cer" x1="1100" x2="1610" y1="0" y2="0" gradientUnits="userSpaceOnUse">
<stop offset="0" stop-color="#103a66"/><stop offset="0.35" stop-color="#1c5aa8"/><stop offset="0.6" stop-color="#2a9a5a"/><stop offset="0.78" stop-color="#d8482a"/><stop offset="0.9" stop-color="#e83a8a"/><stop offset="1" stop-color="#8a4af0"/></linearGradient>
<radialGradient id="nd" cx="0.5" cy="0.5" r="0.5"><stop offset="0" stop-color="#fff"/><stop offset="0.25" stop-color="#fff" stop-opacity=".9"/><stop offset="1" stop-color="#fff" stop-opacity="0"/></radialGradient>
<filter id="f6" x="-20%" y="-20%" width="140%" height="140%"><feGaussianBlur stdDeviation="6"/></filter>
<filter id="f14" x="-20%" y="-20%" width="140%" height="140%"><feGaussianBlur stdDeviation="14"/></filter>
<filter id="f30" x="-30%" y="-30%" width="160%" height="160%"><feGaussianBlur stdDeviation="30"/></filter>
<clipPath id="bc"><path d="M225 700C228 600 290 500 420 415C560 330 780 285 960 282C1160 280 1370 340 1510 420C1640 500 1720 610 1738 740C1750 850 1710 960 1600 1020L1060 1085C900 1075 720 1040 640 970C600 935 585 900 588 872C500 905 380 870 300 820C250 790 225 750 225 700Z"/></clipPath>
</defs><rect width="1964" height="1568" fill="url(#bbg)"/><ellipse cx="120" cy="1300" rx="620" ry="420" fill="url(#gd)"/><ellipse cx="1850" cy="120" rx="560" ry="380" fill="url(#gd)"/><ellipse cx="1850" cy="1450" rx="520" ry="360" fill="url(#gd)"/><ellipse cx="80" cy="80" rx="520" ry="330" fill="url(#gd)" opacity=".7"/><ellipse cx="140" cy="690" rx="420" ry="330" fill="url(#gl)" opacity=".55"/><ellipse cx="1840" cy="830" rx="380" ry="330" fill="url(#gr)" opacity=".6"/><ellipse cx="1000" cy="140" rx="400" ry="260" fill="url(#gt)" opacity=".5"/><ellipse cx="1020" cy="1330" rx="380" ry="320" fill="url(#gr)" opacity=".32"/><g fill="none" stroke-linecap="butt"><path d="M0 30L390 335" stroke="#7fe04a" stroke-width="5.4" opacity="0.98"/><path d="M0 190L230 360" stroke="#4fd06a" stroke-width="5.4" opacity="0.80"/><path d="M130 0L470 250" stroke="#3a9af0" stroke-width="4.1" opacity="0.69"/><path d="M260 0L620 255" stroke="#3a9af0" stroke-width="4.1" opacity="0.57"/><path d="M350 0L640 190" stroke="#b8f23a" stroke-width="5.4" opacity="0.92"/><path d="M440 0L700 170" stroke="#7fe04a" stroke-width="4.1" opacity="0.69"/><path d="M560 0L660 70" stroke="#8a6af0" stroke-width="4.1" opacity="0.57"/><path d="M1350 232L1770 0" stroke="#7fe04a" stroke-width="6.8" opacity="1.00"/><path d="M1440 200L1810 0" stroke="#b8f23a" stroke-width="4.1" opacity="0.69"/><path d="M1385 300L1900 0" stroke="#4fd06a" stroke-width="4.1" opacity="0.57"/><path d="M1450 355L1964 55" stroke="#7fe04a" stroke-width="5.4" opacity="0.92"/><path d="M1600 335L1964 120" stroke="#7fe04a" stroke-width="6.8" opacity="1.00"/><path d="M1690 385L1964 225" stroke="#b8f23a" stroke-width="6.8" opacity="0.98"/><path d="M1500 420L1964 160" stroke="#4fd06a" stroke-width="4.1" opacity="0.40"/><path d="M0 1330L520 1020" stroke="#7fe04a" stroke-width="5.4" opacity="0.92"/><path d="M0 1430L560 1090" stroke="#4fd06a" stroke-width="4.1" opacity="0.63"/><path d="M0 1530L600 1160" stroke="#7fe04a" stroke-width="5.4" opacity="0.86"/><path d="M90 1568L620 1230" stroke="#4fd06a" stroke-width="4.1" opacity="0.57"/><path d="M300 1568L650 1330" stroke="#7fe04a" stroke-width="8.1" opacity="0.92"/><path d="M420 1568L690 1380" stroke="#b8f23a" stroke-width="5.4" opacity="0.63"/><path d="M0 1240L300 1060" stroke="#4fd06a" stroke-width="4.1" opacity="0.46"/><path d="M1400 1225L1964 1560" stroke="#7fe04a" stroke-width="5.4" opacity="0.86"/><path d="M1390 1290L1800 1568" stroke="#7fe04a" stroke-width="8.1" opacity="0.98"/><path d="M1420 1340L1740 1568" stroke="#4fd06a" stroke-width="5.4" opacity="0.69"/><path d="M1560 1200L1964 1440" stroke="#4fd06a" stroke-width="4.1" opacity="0.57"/><path d="M1680 1130L1964 1300" stroke="#3a9af0" stroke-width="4.1" opacity="0.57"/><path d="M1760 1110L1964 1230" stroke="#7fe04a" stroke-width="4.1" opacity="0.57"/><path d="M1300 1300L1620 1568" stroke="#4fd06a" stroke-width="4.1" opacity="0.40"/><path d="M655 0L655 340" stroke="#7fe04a" stroke-width="5.4" opacity="0.80"/><path d="M672 0L672 330" stroke="#36d6c8" stroke-width="4.1" opacity="0.69"/><path d="M720 0L720 310" stroke="#3a9af0" stroke-width="4.1" opacity="0.63"/><path d="M760 0L760 300" stroke="#5ab8ff" stroke-width="4.1" opacity="0.52"/><path d="M850 0L850 290" stroke="#3a9af0" stroke-width="5.4" opacity="0.57"/><path d="M905 0L905 285" stroke="#5ab8ff" stroke-width="4.1" opacity="0.52"/><path d="M960 0L960 280" stroke="#3a9af0" stroke-width="6.8" opacity="0.57"/><path d="M1010 0L1010 285" stroke="#5ab8ff" stroke-width="4.1" opacity="0.52"/><path d="M1060 0L1060 290" stroke="#3a9af0" stroke-width="5.4" opacity="0.57"/><path d="M1120 0L1120 295" stroke="#5ab8ff" stroke-width="4.1" opacity="0.52"/><path d="M1180 0L1180 300" stroke="#3a9af0" stroke-width="4.1" opacity="0.57"/><path d="M1240 0L1240 315" stroke="#5ab8ff" stroke-width="4.1" opacity="0.57"/><path d="M1300 0L1300 330" stroke="#36d6c8" stroke-width="5.4" opacity="0.80"/><path d="M1322 0L1322 335" stroke="#7fe04a" stroke-width="4.1" opacity="0.69"/><path d="M790 1090L790 1568" stroke="#7fe04a" stroke-width="5.4" opacity="0.69"/><path d="M835 1090L835 1568" stroke="#36d6c8" stroke-width="4.1" opacity="0.57"/><path d="M880 1095L880 1568" stroke="#7fe04a" stroke-width="6.8" opacity="0.75"/><path d="M930 1095L930 1568" stroke="#36d6c8" stroke-width="4.1" opacity="0.57"/><path d="M985 1095L985 1568" stroke="#4fd06a" stroke-width="5.4" opacity="0.63"/><path d="M1040 1100L1040 1568" stroke="#36d6c8" stroke-width="4.1" opacity="0.57"/><path d="M1100 1120L1100 1568" stroke="#7fe04a" stroke-width="5.4" opacity="0.63"/><path d="M1160 1150L1160 1568" stroke="#b8f23a" stroke-width="6.8" opacity="0.86"/><path d="M1215 1170L1215 1568" stroke="#4fd06a" stroke-width="5.4" opacity="0.69"/><path d="M1262 1180L1262 1568" stroke="#7fe04a" stroke-width="5.4" opacity="0.69"/><path d="M1290 1185L1290 1568" stroke="#36d6c8" stroke-width="4.1" opacity="0.57"/><path d="M470 1080L560 990L560 930M500 1130L600 1040L600 960M540 1180L640 1085L640 1000" stroke="#7fe04a" stroke-width="4" fill="none" opacity=".7"/><path d="M0 405L300 405" stroke="#4fd06a" stroke-width="4.1" opacity="0.46"/><path d="M0 440L330 440" stroke="#4fd06a" stroke-width="4.1" opacity="0.40"/><path d="M0 505L260 505" stroke="#4fd06a" stroke-width="4.1" opacity="0.46"/><path d="M0 560L250 560" stroke="#7fe04a" stroke-width="4.1" opacity="0.52"/><path d="M0 690L235 690" stroke="#b8f23a" stroke-width="12.2" opacity="1.00"/><path d="M0 705L235 705" stroke="#e8ff8a" stroke-width="4.1" opacity="1.00"/><path d="M0 740L230 740" stroke="#4fd06a" stroke-width="5.4" opacity="0.69"/><path d="M0 762L230 762" stroke="#7fe04a" stroke-width="10.8" opacity="1.00"/><path d="M0 800L250 800" stroke="#4fd06a" stroke-width="5.4" opacity="0.69"/><path d="M0 830L280 830" stroke="#36d6c8" stroke-width="4.1" opacity="0.57"/><path d="M0 868L320 868" stroke="#4fd06a" stroke-width="4.1" opacity="0.57"/><path d="M0 895L330 895" stroke="#b8f23a" stroke-width="5.4" opacity="0.80"/><path d="M0 520L95 520L110 545L110 580L175 640" stroke="#5fd08a" stroke-width="3" fill="none" opacity=".55"/><path d="M0 555L70 555L160 650" stroke="#5fd08a" stroke-width="3" fill="none" opacity=".45"/><path d="M1620 510L1964 510" stroke="#36d6c8" stroke-width="4.1" opacity="0.46"/><path d="M1700 560L1964 560" stroke="#36d6c8" stroke-width="4.1" opacity="0.52"/><path d="M1720 600L1964 600" stroke="#4fd06a" stroke-width="5.4" opacity="0.57"/><path d="M1730 640L1964 640" stroke="#36d6c8" stroke-width="4.1" opacity="0.57"/><path d="M1745 700L1964 700" stroke="#36d6c8" stroke-width="5.4" opacity="0.63"/><path d="M1745 740L1964 740" stroke="#4fd06a" stroke-width="4.1" opacity="0.57"/><path d="M1745 775L1964 775" stroke="#7fe04a" stroke-width="12.2" opacity="1.00"/><path d="M1745 792L1964 792" stroke="#c8ff9a" stroke-width="4.1" opacity="0.98"/><path d="M1745 812L1964 812" stroke="#36d6c8" stroke-width="6.8" opacity="0.80"/><path d="M1735 850L1964 850" stroke="#4fd06a" stroke-width="5.4" opacity="0.69"/><path d="M1725 880L1964 880" stroke="#36d6c8" stroke-width="4.1" opacity="0.57"/><path d="M1700 945L1964 945" stroke="#b8f23a" stroke-width="12.2" opacity="1.00"/><path d="M1700 962L1964 962" stroke="#ffe07a" stroke-width="5.4" opacity="1.00"/><path d="M1680 985L1964 985" stroke="#4fd06a" stroke-width="5.4" opacity="0.69"/><path d="M1650 1010L1964 1010" stroke="#36d6c8" stroke-width="4.1" opacity="0.57"/></g><g filter="url(#f6)" opacity=".55" fill="none"><path d="M0 30L390 335" stroke="#7fe04a" stroke-width="5.4" opacity="0.98"/><path d="M130 0L470 250" stroke="#3a9af0" stroke-width="4.1" opacity="0.69"/><path d="M350 0L640 190" stroke="#b8f23a" stroke-width="5.4" opacity="0.92"/><path d="M560 0L660 70" stroke="#8a6af0" stroke-width="4.1" opacity="0.57"/><path d="M1440 200L1810 0" stroke="#b8f23a" stroke-width="4.1" opacity="0.69"/><path d="M1450 355L1964 55" stroke="#7fe04a" stroke-width="5.4" opacity="0.92"/><path d="M1690 385L1964 225" stroke="#b8f23a" stroke-width="6.8" opacity="0.98"/><path d="M0 1330L520 1020" stroke="#7fe04a" stroke-width="5.4" opacity="0.92"/><path d="M0 1530L600 1160" stroke="#7fe04a" stroke-width="5.4" opacity="0.86"/><path d="M300 1568L650 1330" stroke="#7fe04a" stroke-width="8.1" opacity="0.92"/><path d="M0 1240L300 1060" stroke="#4fd06a" stroke-width="4.1" opacity="0.46"/><path d="M1390 1290L1800 1568" stroke="#7fe04a" stroke-width="8.1" opacity="0.98"/><path d="M1560 1200L1964 1440" stroke="#4fd06a" stroke-width="4.1" opacity="0.57"/><path d="M1760 1110L1964 1230" stroke="#7fe04a" stroke-width="4.1" opacity="0.57"/><path d="M655 0L655 340" stroke="#7fe04a" stroke-width="5.4" opacity="0.80"/><path d="M720 0L720 310" stroke="#3a9af0" stroke-width="4.1" opacity="0.63"/><path d="M850 0L850 290" stroke="#3a9af0" stroke-width="5.4" opacity="0.57"/><path d="M960 0L960 280" stroke="#3a9af0" stroke-width="6.8" opacity="0.57"/><path d="M1060 0L1060 290" stroke="#3a9af0" stroke-width="5.4" opacity="0.57"/><path d="M1180 0L1180 300" stroke="#3a9af0" stroke-width="4.1" opacity="0.57"/><path d="M1300 0L1300 330" stroke="#36d6c8" stroke-width="5.4" opacity="0.80"/><path d="M790 1090L790 1568" stroke="#7fe04a" stroke-width="5.4" opacity="0.69"/><path d="M880 1095L880 1568" stroke="#7fe04a" stroke-width="6.8" opacity="0.75"/><path d="M985 1095L985 1568" stroke="#4fd06a" stroke-width="5.4" opacity="0.63"/><path d="M1100 1120L1100 1568" stroke="#7fe04a" stroke-width="5.4" opacity="0.63"/><path d="M1215 1170L1215 1568" stroke="#4fd06a" stroke-width="5.4" opacity="0.69"/><path d="M1290 1185L1290 1568" stroke="#36d6c8" stroke-width="4.1" opacity="0.57"/><path d="M0 405L300 405" stroke="#4fd06a" stroke-width="4.1" opacity="0.46"/><path d="M0 505L260 505" stroke="#4fd06a" stroke-width="4.1" opacity="0.46"/><path d="M0 690L235 690" stroke="#b8f23a" stroke-width="12.2" opacity="1.00"/><path d="M0 740L230 740" stroke="#4fd06a" stroke-width="5.4" opacity="0.69"/><path d="M0 800L250 800" stroke="#4fd06a" stroke-width="5.4" opacity="0.69"/><path d="M0 868L320 868" stroke="#4fd06a" stroke-width="4.1" opacity="0.57"/><path d="M0 520L95 520L110 545L110 580L175 640" stroke="#5fd08a" stroke-width="3" fill="none" opacity=".55"/><path d="M1620 510L1964 510" stroke="#36d6c8" stroke-width="4.1" opacity="0.46"/><path d="M1720 600L1964 600" stroke="#4fd06a" stroke-width="5.4" opacity="0.57"/><path d="M1745 700L1964 700" stroke="#36d6c8" stroke-width="5.4" opacity="0.63"/><path d="M1745 775L1964 775" stroke="#7fe04a" stroke-width="12.2" opacity="1.00"/><path d="M1745 812L1964 812" stroke="#36d6c8" stroke-width="6.8" opacity="0.80"/><path d="M1725 880L1964 880" stroke="#36d6c8" stroke-width="4.1" opacity="0.57"/><path d="M1700 962L1964 962" stroke="#ffe07a" stroke-width="5.4" opacity="1.00"/><path d="M1650 1010L1964 1010" stroke="#36d6c8" stroke-width="4.1" opacity="0.57"/></g><path d="M225 700C228 600 290 500 420 415C560 330 780 285 960 282C1160 280 1370 340 1510 420C1640 500 1720 610 1738 740C1750 850 1710 960 1600 1020L1060 1085C900 1075 720 1040 640 970C600 935 585 900 588 872C500 905 380 870 300 820C250 790 225 750 225 700Z" fill="none" stroke="#7cf0ff" stroke-width="34" filter="url(#f30)" opacity=".75"/><path d="M225 700C228 600 290 500 420 415C500 365 600 330 700 308" fill="none" stroke="#b8ff3a" stroke-width="40" filter="url(#f30)" opacity=".9"/><path d="M1500 1030L1720 960" fill="none" stroke="#ff9a3a" stroke-width="40" filter="url(#f30)" opacity=".9"/><path d="M860 290C920 280 1000 280 1060 286" fill="none" stroke="#ff7ad0" stroke-width="30" filter="url(#f14)" opacity=".9"/><path d="M1100 1075C1160 1140 1260 1180 1380 1188C1500 1190 1590 1140 1608 1080C1615 1050 1605 1030 1590 1020C1450 1050 1250 1075 1100 1075Z" fill="url(#cer)" stroke="#8ae0ff" stroke-width="6"/><path d="M1100 1075C1160 1140 1260 1180 1380 1188C1500 1190 1590 1140 1608 1080C1615 1050 1605 1030 1590 1020C1450 1050 1250 1075 1100 1075Z" fill="#000" opacity=".25"/><g fill="none" stroke-width="4" opacity=".8"><path d="M1150 1100C1250 1150 1400 1160 1560 1090" stroke="#6ad0ff"/><path d="M1200 1095C1300 1125 1420 1130 1580 1060" stroke="#7ae08a"/><path d="M1260 1160C1350 1175 1480 1165 1570 1110" stroke="#ffd04a"/><path d="M1480 1050C1530 1070 1560 1100 1560 1140" stroke="#ff5a9a" stroke-width="10"/><path d="M1520 1040C1570 1060 1595 1085 1590 1115" stroke="#ff8a3a" stroke-width="8"/></g><path d="M225 700C228 600 290 500 420 415C560 330 780 285 960 282C1160 280 1370 340 1510 420C1640 500 1720 610 1738 740C1750 850 1710 960 1600 1020L1060 1085C900 1075 720 1040 640 970C600 935 585 900 588 872C500 905 380 870 300 820C250 790 225 750 225 700Z" fill="url(#brn)"/><path d="M225 700C228 600 290 500 420 415C560 330 780 285 960 282C1160 280 1370 340 1510 420C1640 500 1720 610 1738 740C1750 850 1710 960 1600 1020L1060 1085C900 1075 720 1040 640 970C600 935 585 900 588 872C500 905 380 870 300 820C250 790 225 750 225 700Z" fill="url(#shade)"/><path d="M225 700C228 600 290 500 420 415C560 330 780 285 960 282C1160 280 1370 340 1510 420C1640 500 1720 610 1738 740C1750 850 1710 960 1600 1020L1060 1085C900 1075 720 1040 640 970C600 935 585 900 588 872C500 905 380 870 300 820C250 790 225 750 225 700Z" fill="#020a14" opacity=".34"/><g clip-path="url(#bc)"><ellipse cx="520" cy="740" rx="230" ry="110" fill="#06280a" opacity=".7" filter="url(#f30)"/><ellipse cx="1330" cy="760" rx="260" ry="150" fill="#061a4a" opacity=".6" filter="url(#f30)"/><ellipse cx="1420" cy="560" rx="300" ry="260" fill="#071c4e" opacity=".42" filter="url(#f30)"/><ellipse cx="1120" cy="560" rx="110" ry="200" fill="#1a0a3a" opacity=".45" filter="url(#f30)"/><ellipse cx="560" cy="640" rx="230" ry="160" fill="#04200a" opacity=".38" filter="url(#f30)"/><ellipse cx="770" cy="760" rx="130" ry="70" fill="#5a0a0a" opacity=".6" filter="url(#f30)"/><ellipse cx="1180" cy="720" rx="70" ry="120" fill="#3a0a5a" opacity=".6" filter="url(#f14)"/><ellipse cx="690" cy="580" rx="120" ry="90" fill="#ffb02a" opacity=".75" filter="url(#f30)"/><ellipse cx="905" cy="520" rx="55" ry="200" fill="#ff2f9a" opacity=".85" filter="url(#f14)"/><ellipse cx="1010" cy="640" rx="80" ry="90" fill="#ff9a2a" opacity=".65" filter="url(#f30)"/><ellipse cx="1170" cy="520" rx="80" ry="120" fill="#5ad02a" opacity=".5" filter="url(#f30)"/><ellipse cx="1450" cy="520" rx="170" ry="150" fill="#3aa8ff" opacity=".5" filter="url(#f30)"/><ellipse cx="1680" cy="780" rx="60" ry="180" fill="#ff4a8a" opacity=".7" filter="url(#f30)"/><ellipse cx="300" cy="640" rx="90" ry="170" fill="#c8ff3a" opacity=".55" filter="url(#f30)"/><ellipse cx="560" cy="420" rx="200" ry="70" fill="#7ae03a" opacity=".5" filter="url(#f30)"/><path d="M590 880C600 830 700 770 900 750C1000 742 1100 760 1150 800L1700 840L1710 960L1600 1025L1060 1090C900 1078 720 1045 640 972C605 940 588 910 590 880Z" fill="url(#tmp)"/><path d="M590 880C600 830 700 770 900 750C1000 742 1100 760 1150 800L1700 840L1710 960L1600 1025L1060 1090C900 1078 720 1045 640 972C605 940 588 910 590 880Z" fill="#000" opacity=".32"/><g fill="none" stroke-width="5" opacity=".85"><path d="M620 900C640 820 760 770 900 762C1020 758 1090 780 1130 810" stroke="#d8ff5a" stroke-width="7"/><path d="M650 915C675 850 780 800 905 792C990 790 1060 800 1110 830" stroke="#ff9a3a"/><path d="M690 935C705 880 800 832 910 826L1240 826" stroke="#7ae03a"/><path d="M730 950C745 905 810 862 900 858L1250 858" stroke="#4ad0a0"/><path d="M770 962C790 925 830 892 900 890L1500 905" stroke="#3a9aff"/><path d="M800 985C830 950 870 925 940 925L1560 935" stroke="#b03af0"/><path d="M720 1010C800 1040 900 1055 1000 1055L1560 990" stroke="#9ae03a" stroke-width="6"/><path d="M880 960L1600 965" stroke="#ff3a8a" stroke-width="6"/><path d="M930 1000L1580 985" stroke="#ff7a3a" stroke-width="4"/></g><g fill="none" stroke-width="5" opacity=".9"><path d="M430 600L640 600M440 640L640 640L700 590M420 690L620 690M470 560L650 560L690 520" stroke="#ffa82a"/><path d="M350 640L420 600M340 690L420 690M380 560L470 560M400 520L560 520" stroke="#8ae03a" stroke-width="4"/><path d="M730 420L730 600L790 660L790 760M770 400L770 590L830 650L830 740M700 450L700 610L760 675" stroke="#ff8a2a"/><path d="M820 390L820 600L860 640L860 720" stroke="#ffc83a" stroke-width="4"/><path d="M880 330L880 700M930 320L930 690M905 430L905 610" stroke="#ff6ac0" stroke-width="6"/><path d="M980 400L980 640L940 690L940 740M1020 420L1020 650L970 710" stroke="#ff9a3a"/><path d="M1090 700L1090 580L1130 540L1130 430L1180 400M1120 720L1120 600L1170 555L1170 450L1210 420" stroke="#ffb43a"/><path d="M1150 735L1150 620L1215 560L1215 460L1170 410M1060 690L1060 570L1100 530" stroke="#a8e03a" stroke-width="4"/><path d="M1250 780L1250 700L1310 640L1310 520M1285 800L1285 720L1345 660L1345 540M1215 860L1215 760" stroke="#4aa8ff"/><path d="M1400 820L1400 700L1450 650L1450 500M1440 830L1440 720L1490 670L1490 520M1360 800L1360 690" stroke="#6ac0ff" stroke-width="4"/><path d="M1540 840L1540 700L1580 650M1580 850L1580 720L1620 680M1500 820L1500 690" stroke="#5aa0ff" stroke-width="4"/></g><g fill="none" stroke-width="4" opacity=".75"><path d="M520 470C560 420 640 400 700 420C740 380 800 360 860 370" stroke="#8af0c0"/><path d="M600 380C700 340 780 330 850 330" stroke="#6ae0ff"/><path d="M980 330C1060 340 1100 380 1180 370C1260 360 1320 380 1380 420" stroke="#8ad0ff"/><path d="M1250 330C1320 350 1400 390 1450 440C1520 470 1580 520 1620 590" stroke="#7ae0ff"/><path d="M1330 420C1350 500 1340 600 1380 690M1500 470C1540 560 1560 640 1560 720M1620 560C1650 640 1660 720 1650 800" stroke="#5ab8ff"/><path d="M300 540C350 470 430 430 520 400M280 640C300 580 330 540 380 500M290 760C330 800 400 830 480 850" stroke="#b8ff4a"/></g></g><path d="M225 700C228 600 290 500 420 415C560 330 780 285 960 282C1160 280 1370 340 1510 420C1640 500 1720 610 1738 740C1750 850 1710 960 1600 1020L1060 1085C900 1075 720 1040 640 970C600 935 585 900 588 872C500 905 380 870 300 820C250 790 225 750 225 700Z" fill="none" stroke="#9af6ff" stroke-width="5" opacity=".9"/><path d="M225 700C228 600 290 500 420 415C520 355 640 315 760 298" fill="none" stroke="#d4ff5a" stroke-width="7"/><path d="M588 872C500 905 380 870 300 820C250 790 225 750 225 700" fill="none" stroke="#b4f03a" stroke-width="7"/><path d="M588 872C585 900 600 935 640 970C720 1040 900 1075 1060 1085" fill="none" stroke="#a8f04a" stroke-width="7"/><path d="M1738 740C1750 850 1710 960 1600 1020" fill="none" stroke="#ffb84a" stroke-width="7"/><circle cx="705" cy="512" r="46" fill="#ffcf4a" opacity=".55" filter="url(#f6)"/><circle cx="705" cy="512" r="19" fill="url(#nd)"/><circle cx="658" cy="645" r="50" fill="#ffd24a" opacity=".55" filter="url(#f6)"/><circle cx="658" cy="645" r="21" fill="url(#nd)"/><circle cx="905" cy="432" r="40" fill="#ffd0f0" opacity=".55" filter="url(#f6)"/><circle cx="905" cy="432" r="17" fill="url(#nd)"/><circle cx="888" cy="347" r="30" fill="#ffb0e8" opacity=".55" filter="url(#f6)"/><circle cx="888" cy="347" r="13" fill="url(#nd)"/><circle cx="1090" cy="412" r="34" fill="#ffe05a" opacity=".55" filter="url(#f6)"/><circle cx="1090" cy="412" r="14" fill="url(#nd)"/><circle cx="1072" cy="480" r="28" fill="#6ad0ff" opacity=".55" filter="url(#f6)"/><circle cx="1072" cy="480" r="12" fill="url(#nd)"/><circle cx="1030" cy="628" r="36" fill="#ffc04a" opacity=".55" filter="url(#f6)"/><circle cx="1030" cy="628" r="15" fill="url(#nd)"/><circle cx="860" cy="690" r="26" fill="#ffb03a" opacity=".55" filter="url(#f6)"/><circle cx="860" cy="690" r="11" fill="url(#nd)"/><circle cx="795" cy="680" r="24" fill="#ffb03a" opacity=".55" filter="url(#f6)"/><circle cx="795" cy="680" r="10" fill="url(#nd)"/><circle cx="866" cy="762" r="28" fill="#ffb04a" opacity=".55" filter="url(#f6)"/><circle cx="866" cy="762" r="12" fill="url(#nd)"/><circle cx="826" cy="800" r="26" fill="#ffc04a" opacity=".55" filter="url(#f6)"/><circle cx="826" cy="800" r="11" fill="url(#nd)"/><circle cx="940" cy="800" r="36" fill="#ff8ae0" opacity=".55" filter="url(#f6)"/><circle cx="940" cy="800" r="15" fill="url(#nd)"/><circle cx="1045" cy="852" r="40" fill="#7ae0ff" opacity=".55" filter="url(#f6)"/><circle cx="1045" cy="852" r="17" fill="url(#nd)"/><circle cx="843" cy="880" r="40" fill="#6af0d0" opacity=".55" filter="url(#f6)"/><circle cx="843" cy="880" r="17" fill="url(#nd)"/><circle cx="1272" cy="742" r="28" fill="#6ab8ff" opacity=".55" filter="url(#f6)"/><circle cx="1272" cy="742" r="12" fill="url(#nd)"/><circle cx="1348" cy="823" r="26" fill="#7ac0ff" opacity=".55" filter="url(#f6)"/><circle cx="1348" cy="823" r="11" fill="url(#nd)"/><circle cx="1388" cy="835" r="22" fill="#ff7ae0" opacity=".55" filter="url(#f6)"/><circle cx="1388" cy="835" r="9" fill="url(#nd)"/><circle cx="1436" cy="928" r="46" fill="#ffb0e0" opacity=".55" filter="url(#f6)"/><circle cx="1436" cy="928" r="19" fill="url(#nd)"/><circle cx="1418" cy="480" r="30" fill="#7ad0ff" opacity=".55" filter="url(#f6)"/><circle cx="1418" cy="480" r="13" fill="url(#nd)"/><circle cx="1434" cy="538" r="30" fill="#8ad8ff" opacity=".55" filter="url(#f6)"/><circle cx="1434" cy="538" r="13" fill="url(#nd)"/><circle cx="1290" cy="440" r="24" fill="#6ac0ff" opacity=".55" filter="url(#f6)"/><circle cx="1290" cy="440" r="10" fill="url(#nd)"/><circle cx="492" cy="512" r="32" fill="#8aff6a" opacity=".55" filter="url(#f6)"/><circle cx="492" cy="512" r="13" fill="url(#nd)"/><circle cx="600" cy="512" r="30" fill="#9affd0" opacity=".55" filter="url(#f6)"/><circle cx="600" cy="512" r="13" fill="url(#nd)"/><circle cx="415" cy="575" r="22" fill="#8affa0" opacity=".55" filter="url(#f6)"/><circle cx="415" cy="575" r="9" fill="url(#nd)"/><circle cx="342" cy="665" r="18" fill="#8aff8a" opacity=".55" filter="url(#f6)"/><circle cx="342" cy="665" r="8" fill="url(#nd)"/><circle cx="1210" cy="792" r="20" fill="#ffc0a0" opacity=".55" filter="url(#f6)"/><circle cx="1210" cy="792" r="8" fill="url(#nd)"/><circle cx="1330" cy="600" r="20" fill="#7ad0ff" opacity=".55" filter="url(#f6)"/><circle cx="1330" cy="600" r="8" fill="url(#nd)"/><circle cx="1240" cy="600" r="20" fill="#8aff6a" opacity=".55" filter="url(#f6)"/><circle cx="1240" cy="600" r="8" fill="url(#nd)"/><circle cx="1256" cy="1032" r="22" fill="#6ab8ff" opacity=".55" filter="url(#f6)"/><circle cx="1256" cy="1032" r="9" fill="url(#nd)"/><circle cx="1148" cy="1025" r="22" fill="#b8ff6a" opacity=".55" filter="url(#f6)"/><circle cx="1148" cy="1025" r="9" fill="url(#nd)"/><circle cx="1320" cy="1030" r="20" fill="#6ab8ff" opacity=".55" filter="url(#f6)"/><circle cx="1320" cy="1030" r="8" fill="url(#nd)"/><circle cx="1380" cy="1050" r="20" fill="#6affc0" opacity=".55" filter="url(#f6)"/><circle cx="1380" cy="1050" r="8" fill="url(#nd)"/><circle cx="945" cy="1018" r="18" fill="#d8ff5a" opacity=".55" filter="url(#f6)"/><circle cx="945" cy="1018" r="8" fill="url(#nd)"/><circle cx="1660" cy="760" r="22" fill="#ff9ad0" opacity=".55" filter="url(#f6)"/><circle cx="1660" cy="760" r="9" fill="url(#nd)"/><circle cx="1690" cy="790" r="18" fill="#ffd06a" opacity=".55" filter="url(#f6)"/><circle cx="1690" cy="790" r="8" fill="url(#nd)"/><circle cx="770" cy="820" r="18" fill="#ffb04a" opacity=".55" filter="url(#f6)"/><circle cx="770" cy="820" r="8" fill="url(#nd)"/><circle cx="1160" cy="465" r="16" fill="#fff" opacity=".55" filter="url(#f6)"/><circle cx="1160" cy="465" r="7" fill="url(#nd)"/><circle cx="740" cy="450" r="16" fill="#7ad0ff" opacity=".55" filter="url(#f6)"/><circle cx="740" cy="450" r="7" fill="url(#nd)"/><circle cx="1200" cy="690" r="16" fill="#ff8ae0" opacity=".55" filter="url(#f6)"/><circle cx="1200" cy="690" r="7" fill="url(#nd)"/></svg>
<div class="a" style='left:1632.8px;top:450.75px;width:490.7px;height:14px;display:flex;white-space:nowrap;font-family:"Liberation Serif",serif;font-size:11.88px;line-height:1;color:#000;'><span style="width:24.0px;flex:none;">1</span><span style="flex:none;">Visualisation 1</span><span style="flex:1;overflow:hidden;direction:rtl;letter-spacing:0.35px;margin-left:1px;">....................................................................................................................................................................................................................................................................</span><span style='flex:none;font-family:"Liberation Sans",sans-serif;font-size:11.2px;padding-left:2.5px;padding-top:0.6px;'>1</span></div>
<div class="a" style='left:1644.8px;top:471.85px;width:478.7px;height:14px;display:flex;white-space:nowrap;font-family:"Liberation Serif",serif;font-size:11.88px;line-height:1;color:#000;'><span style="width:40.2px;flex:none;">1.1</span><span style="flex:none;">Description Visualisation 1</span><span style="flex:1;overflow:hidden;direction:rtl;letter-spacing:0.35px;margin-left:1px;">....................................................................................................................................................................................................................................................................</span><span style='flex:none;font-family:"Liberation Sans",sans-serif;font-size:11.2px;padding-left:2.5px;padding-top:0.6px;'>1</span></div>
<div class="a" style='left:1644.8px;top:492.95px;width:478.7px;height:14px;display:flex;white-space:nowrap;font-family:"Liberation Serif",serif;font-size:11.88px;line-height:1;color:#000;'><span style="width:40.2px;flex:none;">1.2</span><span style="flex:none;">Analysis Visualisation 1</span><span style="flex:1;overflow:hidden;direction:rtl;letter-spacing:0.35px;margin-left:1px;">....................................................................................................................................................................................................................................................................</span><span style='flex:none;font-family:"Liberation Sans",sans-serif;font-size:11.2px;padding-left:2.5px;padding-top:0.6px;'>2</span></div>
<div class="a" style='left:1656.8px;top:514.05px;width:466.7px;height:14px;display:flex;white-space:nowrap;font-family:"Liberation Serif",serif;font-size:11.88px;line-height:1;color:#000;'><span style="width:41.1px;flex:none;">1.2.1</span><span style="flex:none;">Principles of Design</span><span style="flex:1;overflow:hidden;direction:rtl;letter-spacing:0.35px;margin-left:1px;">....................................................................................................................................................................................................................................................................</span><span style='flex:none;font-family:"Liberation Sans",sans-serif;font-size:11.2px;padding-left:2.5px;padding-top:0.6px;'>2</span></div>
<div class="a" style='left:1656.8px;top:535.15px;width:466.7px;height:14px;display:flex;white-space:nowrap;font-family:"Liberation Serif",serif;font-size:11.88px;line-height:1;color:#000;'><span style="width:41.1px;flex:none;">1.2.2</span><span style="flex:none;">Principles of Visualisation</span><span style="flex:1;overflow:hidden;direction:rtl;letter-spacing:0.35px;margin-left:1px;">....................................................................................................................................................................................................................................................................</span><span style='flex:none;font-family:"Liberation Sans",sans-serif;font-size:11.2px;padding-left:2.5px;padding-top:0.6px;'>3</span></div>
<div class="a" style='left:1656.8px;top:556.25px;width:466.7px;height:14px;display:flex;white-space:nowrap;font-family:"Liberation Serif",serif;font-size:11.88px;line-height:1;color:#000;'><span style="width:41.1px;flex:none;">1.2.3</span><span style="flex:none;">Interaction Models</span><span style="flex:1;overflow:hidden;direction:rtl;letter-spacing:0.35px;margin-left:1px;">....................................................................................................................................................................................................................................................................</span><span style='flex:none;font-family:"Liberation Sans",sans-serif;font-size:11.2px;padding-left:2.5px;padding-top:0.6px;'>4</span></div>
<div class="a" style='left:1632.8px;top:577.35px;width:490.7px;height:14px;display:flex;white-space:nowrap;font-family:"Liberation Serif",serif;font-size:11.88px;line-height:1;color:#000;'><span style="width:24.0px;flex:none;">2</span><span style="flex:none;">Visualisation 2</span><span style="flex:1;overflow:hidden;direction:rtl;letter-spacing:0.35px;margin-left:1px;">....................................................................................................................................................................................................................................................................</span><span style='flex:none;font-family:"Liberation Sans",sans-serif;font-size:11.2px;padding-left:2.5px;padding-top:0.6px;'>5</span></div>
<div class="a" style='left:1644.8px;top:598.45px;width:478.7px;height:14px;display:flex;white-space:nowrap;font-family:"Liberation Serif",serif;font-size:11.88px;line-height:1;color:#000;'><span style="width:40.2px;flex:none;">2.1</span><span style="flex:none;">Description Visualisation 2</span><span style="flex:1;overflow:hidden;direction:rtl;letter-spacing:0.35px;margin-left:1px;">....................................................................................................................................................................................................................................................................</span><span style='flex:none;font-family:"Liberation Sans",sans-serif;font-size:11.2px;padding-left:2.5px;padding-top:0.6px;'>5</span></div>
<div class="a" style='left:1644.8px;top:619.55px;width:478.7px;height:14px;display:flex;white-space:nowrap;font-family:"Liberation Serif",serif;font-size:11.88px;line-height:1;color:#000;'><span style="width:40.2px;flex:none;">2.2</span><span style="flex:none;">Analysis Visualisation 2</span><span style="flex:1;overflow:hidden;direction:rtl;letter-spacing:0.35px;margin-left:1px;">....................................................................................................................................................................................................................................................................</span><span style='flex:none;font-family:"Liberation Sans",sans-serif;font-size:11.2px;padding-left:2.5px;padding-top:0.6px;'>6</span></div>
<div class="a" style='left:1656.8px;top:640.65px;width:466.7px;height:14px;display:flex;white-space:nowrap;font-family:"Liberation Serif",serif;font-size:11.88px;line-height:1;color:#000;'><span style="width:41.1px;flex:none;">2.2.1</span><span style="flex:none;">Principles of Design</span><span style="flex:1;overflow:hidden;direction:rtl;letter-spacing:0.35px;margin-left:1px;">....................................................................................................................................................................................................................................................................</span><span style='flex:none;font-family:"Liberation Sans",sans-serif;font-size:11.2px;padding-left:2.5px;padding-top:0.6px;'>6</span></div>
<div class="a" style='left:1656.8px;top:661.75px;width:466.7px;height:14px;display:flex;white-space:nowrap;font-family:"Liberation Serif",serif;font-size:11.88px;line-height:1;color:#000;'><span style="width:41.1px;flex:none;">2.2.2</span><span style="flex:none;">Principles of Visualisations</span><span style="flex:1;overflow:hidden;direction:rtl;letter-spacing:0.35px;margin-left:1px;">....................................................................................................................................................................................................................................................................</span><span style='flex:none;font-family:"Liberation Sans",sans-serif;font-size:11.2px;padding-left:2.5px;padding-top:0.6px;'>7</span></div>
<div class="a" style='left:1656.8px;top:682.85px;width:466.7px;height:14px;display:flex;white-space:nowrap;font-family:"Liberation Serif",serif;font-size:11.88px;line-height:1;color:#000;'><span style="width:41.1px;flex:none;">2.2.3</span><span style="flex:none;">Interaction Models</span><span style="flex:1;overflow:hidden;direction:rtl;letter-spacing:0.35px;margin-left:1px;">....................................................................................................................................................................................................................................................................</span><span style='flex:none;font-family:"Liberation Sans",sans-serif;font-size:11.2px;padding-left:2.5px;padding-top:0.6px;'>7</span></div>
<div class="a" style='left:1632.8px;top:703.95px;width:490.7px;height:14px;display:flex;white-space:nowrap;font-family:"Liberation Serif",serif;font-size:11.88px;line-height:1;color:#000;'><span style="width:24.0px;flex:none;">3</span><span style="flex:none;">User Goal</span><span style="flex:1;overflow:hidden;direction:rtl;letter-spacing:0.35px;margin-left:1px;">....................................................................................................................................................................................................................................................................</span><span style='flex:none;font-family:"Liberation Sans",sans-serif;font-size:11.2px;padding-left:2.5px;padding-top:0.6px;'>8</span></div>
<div class="a" style='left:1644.8px;top:725.05px;width:478.7px;height:14px;display:flex;white-space:nowrap;font-family:"Liberation Serif",serif;font-size:11.88px;line-height:1;color:#000;'><span style="width:40.2px;flex:none;">3.1</span><span style="flex:none;">Visualisation 1: User Goal</span><span style="flex:1;overflow:hidden;direction:rtl;letter-spacing:0.35px;margin-left:1px;">....................................................................................................................................................................................................................................................................</span><span style='flex:none;font-family:"Liberation Sans",sans-serif;font-size:11.2px;padding-left:2.5px;padding-top:0.6px;'>8</span></div>
<div class="a" style='left:1656.8px;top:746.15px;width:466.7px;height:14px;display:flex;white-space:nowrap;font-family:"Liberation Serif",serif;font-size:11.88px;line-height:1;color:#000;'><span style="width:41.1px;flex:none;">3.1.1</span><span style="flex:none;">Seven-Stage Model</span><span style="flex:1;overflow:hidden;direction:rtl;letter-spacing:0.35px;margin-left:1px;">....................................................................................................................................................................................................................................................................</span><span style='flex:none;font-family:"Liberation Sans",sans-serif;font-size:11.2px;padding-left:2.5px;padding-top:0.6px;'>8</span></div>
<div class="a" style='left:1644.8px;top:767.25px;width:478.7px;height:14px;display:flex;white-space:nowrap;font-family:"Liberation Serif",serif;font-size:11.88px;line-height:1;color:#000;'><span style="width:40.2px;flex:none;">3.2</span><span style="flex:none;">Visualisation 2: User Goal</span><span style="flex:1;overflow:hidden;direction:rtl;letter-spacing:0.35px;margin-left:1px;">....................................................................................................................................................................................................................................................................</span><span style='flex:none;font-family:"Liberation Sans",sans-serif;font-size:11.2px;padding-left:2.5px;padding-top:0.6px;'>9</span></div>
<div class="a" style='left:1656.8px;top:788.35px;width:466.7px;height:14px;display:flex;white-space:nowrap;font-family:"Liberation Serif",serif;font-size:11.88px;line-height:1;color:#000;'><span style="width:41.1px;flex:none;">3.2.1</span><span style="flex:none;">GOMS Model</span><span style="flex:1;overflow:hidden;direction:rtl;letter-spacing:0.35px;margin-left:1px;">....................................................................................................................................................................................................................................................................</span><span style='flex:none;font-family:"Liberation Sans",sans-serif;font-size:11.2px;padding-left:2.5px;padding-top:0.6px;'>10</span></div>
<div class="a" style='left:1632.8px;top:809.45px;width:490.7px;height:14px;display:flex;white-space:nowrap;font-family:"Liberation Serif",serif;font-size:11.88px;line-height:1;color:#000;'><span style="width:24.0px;flex:none;">4</span><span style="flex:none;">Comparison of how the Visualisations achieve the user goal</span><span style="flex:1;overflow:hidden;direction:rtl;letter-spacing:0.35px;margin-left:1px;">....................................................................................................................................................................................................................................................................</span><span style='flex:none;font-family:"Liberation Sans",sans-serif;font-size:11.2px;padding-left:2.5px;padding-top:0.6px;'>11</span></div>
<div class="a" style='left:1632.8px;top:830.55px;width:490.7px;height:14px;display:flex;white-space:nowrap;font-family:"Liberation Serif",serif;font-size:11.88px;line-height:1;color:#000;'><span style="width:24.0px;flex:none;">5</span><span style="flex:none;">Use of AI and Translation Tools</span><span style="flex:1;overflow:hidden;direction:rtl;letter-spacing:0.35px;margin-left:1px;">....................................................................................................................................................................................................................................................................</span><span style='flex:none;font-family:"Liberation Sans",sans-serif;font-size:11.2px;padding-left:2.5px;padding-top:0.6px;'>12</span></div>
<div class="ln" style="left:316.8px;top:1420.05px;width:491.6px;font-size:11.88px;letter-spacing:-0.0256px;">The first visualisation displays statistically and historically documented Switzerland’s population by the</div>
<div class="ln" style="left:316.8px;top:1440.52px;width:491.6px;font-size:11.88px;">demographics age and sex for the years from 1950 up to 2024 and giving a potential forecast going up</div>
<div class="ln" style="left:316.8px;top:1460.99px;width:491.6px;font-size:11.88px;">to 2100. It was retrieved from the United Nations World Population Prospects Division’s website</div>
<div class="ln" style="left:316.8px;top:1481.46px;width:491.6px;font-size:11.88px;">(<span style='color:#467886;text-decoration:underline;'>Source Figure 1</span>). The mentioned visualisation is a 2D dynamic and interactive population pyramid</div>
<div class="ln" style="left:316.8px;top:1501.93px;width:491.6px;font-size:11.88px;">plotted on a grided coordinate system. To interact with the visualisation there is a slider on top of the</div>
<div class="ln" style="left:316.8px;top:1522.40px;width:491.6px;font-size:11.88px;letter-spacing:-0.0317px;">graph, which can be used to change the year leading the graph to update accordingly. There are 2 y-axes</div>
<div class="ln" style="left:316.8px;top:1542.87px;width:491.6px;font-size:11.88px;">(age, year of birth) and 1 x-axis (population in thousands). From the year 1950 up until the year the</div>
<div class="ln" style="left:316.8px;top:1563.34px;width:491.6px;font-size:11.88px;">graph is viewed, it shows the historically documented data and from the year the graph is viewed up to</div>
<div class="ln" style="left:316.8px;top:1583.81px;width:491.6px;font-size:11.88px;">the year 2100, it gives 2 types of predictions in form of standard deviations, namely an 80% prediction</div>
<div class="ln" style="left:975.4px;top:1369.85px;width:491px;font-size:11.88px;">The visualisation’s <b>design layout</b> appears to be logically <b>mapped</b> due to the graph being well-centered</div>
<div class="ln" style="left:975.4px;top:1390.38px;width:491px;font-size:11.88px;">providing a good view of the population pyramid. Both the vertical (age, year of birth) and horizontal</div>
<div class="ln" style="left:975.4px;top:1410.91px;width:491px;font-size:11.88px;">axes (population in thousands) are logically placed. The left side of the y-axis shows age, ranging from</div>
<div class="ln" style="left:975.4px;top:1431.44px;width:491px;font-size:11.88px;letter-spacing:-0.0431px;">0 to 110, and the right side showing the corresponding year of birth dynamically. Dynamically meaning,</div>
<div class="ln" style="left:975.4px;top:1451.97px;width:491px;font-size:11.88px;">that the age and the year of birth are linked to each other depending on the year using the slider. The x-</div>
<div class="ln" style="left:975.4px;top:1472.50px;width:491px;font-size:11.88px;letter-spacing:-0.0370px;">axis takes the population in thousands and the sex distribution into account, where the left side indicates</div>
<div class="ln" style="left:975.4px;top:1493.03px;width:491px;font-size:11.88px;">the males and the right side the females. It ranges from 0 to 120 in both sides. These axes labelling</div>
<div class="ln" style="left:975.4px;top:1513.56px;width:491px;font-size:11.88px;text-align:left;text-align-last:left;">support effective and intuitive data <b>mapping (InfoVis)</b>.</div>
<div class="ln" style="left:975.4px;top:1542.95px;width:491px;font-size:11.88px;">There are 3 ways to manipulate the visualisation two of them are <b>affordances</b>. There is a slider, which</div>
<div class="ln" style="left:975.4px;top:1563.35px;width:491px;font-size:11.88px;">shall rather be used when moving over larger time stamps. It is marked with an unambiguous dot what</div>
<div class="ln" style="left:975.4px;top:1583.75px;width:491px;font-size:11.88px;">makes use of <b>discoverability</b>, which lets the user know, that its dynamic and is therefore a <b>signifier</b>.</div>
<div class="ln" style="left:975.4px;top:1604.15px;width:491px;font-size:11.88px;">Then there are two arrow keys with <b>signifiers</b> on them with which the slider function is activated by</div>
<div class="ln" style="left:1632.8px;top:1588.15px;width:491.2px;font-size:11.88px;letter-spacing:-0.0076px;">Since the legend is placed in the visualization, there is a potential <b>constraint</b> when moving the slider to</div>
<svg class="a" style="left:486.4px;top:395.1px;" width="48" height="48" viewBox="0 0 48 48"><circle cx="24" cy="24" r="23.1" fill="#fff" stroke="#555" stroke-width="1.3"/>
<circle cx="24" cy="24" r="21.4" fill="none" stroke="#9a9a9a" stroke-width=".5"/>
<path id="sl" d="M7.2 33.5A19.2 19.2 0 1 1 40.8 33.5" fill="none"/>
<text font-family="Liberation Serif, serif" font-size="3.6" fill="#444" letter-spacing=".55"><textPath href="#sl" startOffset="2">VNIVERSITAS  TVRICENSIS</textPath></text>
<path d="M17.2 35V12.2L18.6 6.5L20 12.2V20L22.4 13L24 9L25.6 13L28 20V12.2L29.4 6.5L30.8 12.2V35Z" fill="#eee" stroke="#2a2a2a" stroke-width=".8"/>
<path d="M17.2 14h2.8M28 14h2.8M17.2 20h13.6M17.2 24h13.6M17.2 28h13.6M17.2 32h13.6M20 20V35M28 20V35M22.6 28v7M25.4 28v7" stroke="#444" stroke-width=".5" fill="none"/>
<path d="M18 8.5h1.2v3h-1.2zM28.8 8.5h1.2v3h-1.2zM18 15h1.3v4h-1.3zM28.7 15h1.3v4h-1.3zM21.5 15l2.5-4.5 2.5 4.5v4h-5z" fill="#555"/>
<path d="M23 24.3h2v2.6l-1 1-1-1z" fill="#222"/>
<path d="M5.3 35.3h37.4M6.6 37.6h34.8M9.5 41h29" stroke="#444" stroke-width=".6"/>
<path d="M8 37.6l2 3.2 2-3.2 2 3.2 2-3.2 2 3.2 2-3.2M28 37.6l2 3.2 2-3.2 2 3.2 2-3.2 2 3.2 2-3.2" stroke="#666" stroke-width=".5" fill="none"/>
<path d="M22.6 36.8h2.8v4.4h-2.8zM24 41v3" stroke="#222" stroke-width=".8" fill="#fff"/><circle cx="24" cy="38.8" r="1" fill="#222"/></svg>
<svg class="a" style="left:0;top:0;" width="2478" height="1606" viewBox="0 0 2478 1606"><path d="M1666.9 1301V1555.9 M1730.6 1301V1555.9 M1794.5 1301V1555.9 M1858.2 1301V1555.9 M1922.2 1301V1555.9 M1985.8 1301V1555.9 M1954 1362V1555.9 M1634.9 1332.2H2029 M1634.9 1389.4H2029 M1634.9 1446.4H2029 M1634.9 1503H2029" stroke="#b0b0b0" stroke-width="1" stroke-dasharray="1.2 3" fill="none"/><path d="M1688.2 1550.26H1920.5V1555.90H1688.2ZM1689.1 1544.62H1919.6V1550.26H1689.1ZM1692.6 1538.98H1918.8V1544.62H1692.6ZM1694.6 1533.34H1918.1V1538.98H1694.6ZM1696.1 1527.70H1917.6V1533.34H1696.1ZM1698.4 1522.06H1917.2V1527.70H1698.4ZM1701.2 1516.42H1914.1V1522.06H1701.2ZM1702.1 1510.78H1910.7V1516.42H1702.1ZM1710.8 1505.14H1913.9V1510.78H1710.8ZM1707.7 1499.50H1903.7V1505.14H1707.7ZM1708.6 1493.86H1902.7V1499.50H1708.6ZM1709.8 1488.22H1900.2V1493.86H1709.8ZM1710.9 1482.58H1896.2V1488.22H1710.9ZM1711.9 1476.94H1891.7V1482.58H1711.9ZM1712.5 1471.30H1886.5V1476.94H1712.5ZM1710.8 1465.66H1880.0V1471.30H1710.8ZM1706.8 1460.02H1874.3V1465.66H1706.8ZM1703.8 1454.38H1868.7V1460.02H1703.8ZM1701.1 1448.74H1863.0V1454.38H1701.1ZM1699.7 1443.10H1857.4V1448.74H1699.7ZM1694.4 1437.46H1849.0V1443.10H1694.4ZM1688.5 1431.82H1839.4V1437.46H1688.5ZM1681.5 1426.18H1830.0V1431.82H1681.5ZM1674.0 1420.54H1818.8V1426.18H1674.0ZM1666.5 1414.90H1803.6V1420.54H1666.5ZM1659.0 1409.26H1785.6V1414.90H1659.0ZM1652.7 1403.62H1771.1V1409.26H1652.7ZM1647.6 1397.98H1757.0V1403.62H1647.6ZM1643.5 1392.34H1743.3V1397.98H1643.5ZM1640.3 1386.70H1726.7V1392.34H1640.3ZM1638.0 1381.06H1709.0V1386.70H1638.0ZM1637.0 1375.42H1690.2V1381.06H1637.0ZM1636.7 1369.78H1670.6V1375.42H1636.7ZM1636.3 1364.14H1658.1V1369.78H1636.3ZM1636.0 1358.50H1648.2V1364.14H1636.0ZM1635.7 1352.86H1640.7V1358.50H1635.7ZM1635.3 1347.22H1639.0V1352.86H1635.3ZM1635.0 1341.58H1636.8V1347.22H1635.0Z" fill="#ffff5c"/><path d="M1730.0 1550.26H1862.0V1555.90H1730.0ZM1732.1 1544.62H1862.9V1550.26H1732.1ZM1734.9 1538.98H1863.8V1544.62H1734.9ZM1737.7 1533.34H1863.9V1538.98H1737.7ZM1740.6 1527.70H1863.4V1533.34H1740.6ZM1741.8 1522.06H1863.0V1527.70H1741.8ZM1742.4 1516.42H1861.0V1522.06H1742.4ZM1742.4 1510.78H1858.8V1516.42H1742.4ZM1747.8 1505.14H1865.5V1510.78H1747.8ZM1744.0 1499.50H1858.0V1505.14H1744.0ZM1745.0 1493.86H1857.4V1499.50H1745.0ZM1746.1 1488.22H1855.7V1493.86H1746.1ZM1745.7 1482.58H1853.7V1488.22H1745.7ZM1744.7 1476.94H1851.3V1482.58H1744.7ZM1741.9 1471.30H1847.9V1476.94H1741.9ZM1738.2 1465.66H1844.2V1471.30H1738.2ZM1733.7 1460.02H1838.7V1465.66H1733.7ZM1729.2 1454.38H1834.2V1460.02H1729.2ZM1724.8 1448.74H1829.6V1454.38H1724.8ZM1721.3 1443.10H1825.1V1448.74H1721.3ZM1714.0 1437.46H1818.1V1443.10H1714.0ZM1704.9 1431.82H1809.7V1437.46H1704.9ZM1696.8 1426.18H1800.2V1431.82H1696.8ZM1688.0 1420.54H1787.7V1426.18H1688.0ZM1678.6 1414.90H1770.5V1420.54H1678.6ZM1669.2 1409.26H1753.2V1414.90H1669.2ZM1661.0 1403.62H1733.8V1409.26H1661.0ZM1654.1 1397.98H1715.5V1403.62H1654.1ZM1648.7 1392.34H1701.2V1397.98H1648.7ZM1644.5 1386.70H1688.5V1392.34H1644.5ZM1641.3 1381.06H1675.0V1386.70H1641.3ZM1639.0 1375.42H1661.8V1381.06H1639.0ZM1637.8 1369.78H1652.0V1375.42H1637.8ZM1637.3 1364.14H1644.5V1369.78H1637.3ZM1636.7 1358.50H1640.0V1364.14H1636.7ZM1636.2 1352.86H1638.0V1358.50H1636.2ZM1635.6 1347.22H1636.3V1352.86H1635.6Z" fill="#7dfa4c"/><path d="M1634.9 1553.38H1792.7M1634.9 1547.74H1795.1M1634.9 1542.10H1797.3M1634.9 1536.46H1799.1M1634.9 1530.82H1801.0M1634.9 1525.18H1802.3M1634.9 1519.54H1802.7M1634.9 1513.90H1800.0M1634.9 1508.26H1807.2M1634.9 1502.62H1801.7M1634.9 1496.98H1802.1M1634.9 1491.34H1802.1M1634.9 1485.70H1800.8M1634.9 1480.06H1799.8M1634.9 1474.42H1795.2M1634.9 1468.78H1792.0M1634.9 1463.14H1785.9M1634.9 1457.50H1781.1M1634.9 1451.86H1774.7M1634.9 1446.22H1770.3M1634.9 1440.58H1760.8M1634.9 1434.94H1750.8M1634.9 1429.30H1739.2M1634.9 1423.66H1726.8M1634.9 1418.02H1714.2M1634.9 1412.38H1701.1M1634.9 1406.74H1688.0M1634.9 1401.10H1676.2M1634.9 1395.46H1665.4M1634.9 1389.82H1657.6M1634.9 1384.18H1650.9M1634.9 1378.54H1644.9M1634.9 1372.90H1640.2M1634.9 1367.26H1637.3M1634.9 1361.62H1636.3M1634.9 1355.98H1635.8M1634.9 1350.34H1635.5M1634.9 1344.70H1635.2M1634.9 1339.06H1635.1M1634.9 1333.42H1635.0M1634.9 1327.78H1634.9" stroke="#0a0adc" stroke-width="1.9" fill="none"/><path d="M1792.7 1550.78V1555.98M1795.1 1545.14V1550.34M1797.3 1539.50V1544.70M1799.1 1533.86V1539.06M1801.0 1528.22V1533.42M1802.3 1522.58V1527.78M1802.7 1516.94V1522.14M1800.0 1511.30V1516.50M1807.2 1505.66V1510.86M1801.7 1500.02V1505.22M1802.1 1494.38V1499.58M1802.1 1488.74V1493.94M1800.8 1483.10V1488.30M1799.8 1477.46V1482.66M1795.2 1471.82V1477.02M1792.0 1466.18V1471.38M1785.9 1460.54V1465.74M1781.1 1454.90V1460.10M1774.7 1449.26V1454.46M1770.3 1443.62V1448.82M1760.8 1437.98V1443.18M1750.8 1432.34V1437.54M1739.2 1426.70V1431.90M1726.8 1421.06V1426.26M1714.2 1415.42V1420.62M1701.1 1409.78V1414.98M1688.0 1404.14V1409.34M1676.2 1398.50V1403.70M1665.4 1392.86V1398.06M1657.6 1387.22V1392.42M1650.9 1381.58V1386.78M1644.9 1375.94V1381.14M1640.2 1370.30V1375.50M1637.3 1364.66V1369.86M1636.3 1359.02V1364.22M1635.8 1353.38V1358.58M1635.5 1347.74V1352.94M1635.2 1342.10V1347.30M1635.1 1336.46V1341.66M1635.0 1330.82V1336.02M1634.9 1325.18V1330.38" stroke="#0a0adc" stroke-width="3.4" stroke-linecap="round" fill="none"/><path d="M1634.9 1331V1555.9" stroke="#0a0adc" stroke-width="2.8" stroke-linecap="round"/><path d="M1634.9 1395V1555.9" stroke="#111" stroke-width="1" stroke-dasharray="1.5 4.1"/><path d="M2029.8 1332.5V1555.9 M2029.8 1333.0H2041.6 M2029.8 1361.4H2041.6 M2029.8 1389.8H2041.6 M2029.8 1418.3H2041.6 M2029.8 1446.7H2041.6 M2029.8 1475.1H2041.6 M2029.8 1503.5H2041.6 M2029.8 1531.9H2041.6" stroke="#111" stroke-width="1.2" fill="none"/><path d="M1825.5 1389.2H1842.5" stroke="#0a0adc" stroke-width="3" stroke-linecap="round"/><path d="M1826 1405.3H1842" stroke="#7dfa4c" stroke-width="5.5" stroke-linecap="round"/><path d="M1826 1421.8H1842" stroke="#ffff5c" stroke-width="5.5" stroke-linecap="round"/><path d="M1685 1291.6l1.6 1.8 1.8-.6M1713.5 1291.6c1 2 4 2.2 5.6 .4" stroke="#111" stroke-width="1.4" fill="none"/></svg>
<div class="a" style="left:2042px;top:1540px;width:40px;height:16px;overflow:hidden;"><span class="t" style='left:0.8px;top:11px;font-family:"Liberation Sans",sans-serif;font-size:19px;color:#111;transform:scaleX(.81);transform-origin:0 0;'>2030</span></div>
<div class="a" style="left:2455.5px;top:285.5px;width:23px;height:1321px;background:#3e3e3e;border-radius:11px 0 0 11px;"></div>
<div class="a" style="left:2462px;top:311px;width:12px;height:361px;background:#c7c7c7;border-radius:6px;"></div>
<svg class="a" style="left:2460px;top:291px;" width="16" height="12" viewBox="0 0 16 12"><path d="M1.5 11 L8 1.5 L14.5 11 Z" fill="#c6c6c6" stroke="#c6c6c6" stroke-width="1.5" stroke-linejoin="round"/></svg>
<svg class="a" style="left:2460px;top:1587px;" width="16" height="12" viewBox="0 0 16 12"><path d="M1.5 1 L8 10.5 L14.5 1 Z" fill="#c6c6c6" stroke="#c6c6c6" stroke-width="1.5" stroke-linejoin="round"/></svg>
<div class="a" style="left:0px;top:1606px;width:2478px;height:45px;background:#515151;border-top:1px solid #3a3a3a;box-sizing:border-box;"></div>
<div class="a" style="left:2072.8px;top:1607px;width:62.3px;height:44px;background:#5e5e5e;"></div>
<div class="a" style="left:2225px;top:1630px;width:148px;height:1.3px;background:#d0d0d0;"></div>
<div class="a" style="left:2259px;top:1622px;width:8px;height:17.5px;background:#c8c8c8;"></div>
<div class="a" style="left:2298.5px;top:1627px;width:1.2px;height:7.5px;background:#d0d0d0;"></div>
<svg class="a" style="left:0;top:1606px;" width="2478" height="45" viewBox="0 1606 2478 45"><path d="M300.2 1629.4V1623.6Q300.2 1622 298.6 1621.8H290.9V1638.4H300.2V1632.8" stroke="#fff" stroke-width="1.7" fill="none" /><path d="M300.2 1623.6Q300.4 1622 302 1621.8H309.4V1629.2" stroke="#fff" stroke-width="1.7" fill="none" /><path d="M301.4 1630.6L311.2 1640.4M311.2 1630.6L301.4 1640.4" stroke="#fff" stroke-width="1.6" fill="none" /><path d="M821.6 1638.5H814.9V1621.5H835V1627.6M814.9 1624.8H835" stroke="#fff" stroke-width="1.6" fill="none" /><path d="M816.8 1627.9H821.2M816.8 1631H820.4M816.8 1634.1H820.4" stroke="#fff" stroke-width="1.3" fill="none" /><circle cx="828.6" cy="1633.9" r="6.1" fill="#515151" stroke="#fff" stroke-width="1.5"/><circle cx="828.6" cy="1633.9" r="3" fill="#fff"/><circle cx="888.3" cy="1622.6" r="2.3" fill="none" stroke="#fff" stroke-width="1.3"/><path d="M880.6 1624.4Q879.4 1626 881 1626.8L885.6 1628.4L883 1638Q883.2 1640 885 1639.6Q885.8 1639.4 886.2 1638.4L888.2 1633.8L889.4 1635.4M891.6 1628.2L896.4 1626.4Q897.8 1625.6 896.8 1624.2Q896.2 1623.6 895.2 1624L890.4 1625.8H886.2L881.8 1624Q881 1623.8 880.6 1624.4" stroke="#fff" stroke-width="1.3" fill="none" /><path d="M890.8 1631L899.8 1640M899.8 1631L890.8 1640" stroke="#fff" stroke-width="1.4" fill="none" /><path d="M1918.4 1623.6V1619.4H1922.6M1935.6 1619.4H1939.8V1623.6M1939.8 1636V1640.2H1935.6M1922.6 1640.2H1918.4V1636" stroke="#fff" stroke-width="1.5" fill="none" /><path d="M1923.6 1623.8H1930.4L1934.4 1627.8V1636.4H1923.6ZM1930.2 1624V1628H1934.2" stroke="#fff" stroke-width="1.4" fill="none" /><path d="M2041.2 1623V1639.4M2041.2 1623Q2037 1621 2031.9 1621.4V1637.6Q2037 1637.2 2041.2 1639.4Q2045.4 1637.2 2050.5 1637.6V1621.4Q2045.4 1621 2041.2 1623" stroke="#fff" stroke-width="1.5" fill="none" /><path d="M2034 1625H2039M2034 1628H2039M2034 1631H2039M2034 1634H2039M2043.4 1625H2048.4M2043.4 1628H2048.4M2043.4 1631H2048.4M2043.4 1634H2048.4" stroke="#fff" stroke-width="1.2" fill="none" /><path d="M2095.8 1621.3H2111.2V1641H2095.8Z" stroke="#fff" stroke-width="1.5" fill="none" /><path d="M2098.4 1624H2108.7M2098.4 1626.8H2108.7M2098.4 1629.6H2108.7M2098.4 1632.4H2108.7M2098.4 1635.2H2108.7M2098.4 1638H2108.7" stroke="#fff" stroke-width="1.3" fill="none" /><path d="M2163 1639.2H2155.7V1621.3H2173.8V1627.6M2155.7 1624.2H2173.8" stroke="#fff" stroke-width="1.5" fill="none" /><path d="M2158.4 1627.4H2170M2158.4 1630.4H2163.6M2158.4 1633.4H2162.4M2158.4 1636.4H2162.4" stroke="#fff" stroke-width="1.2" fill="none" /><circle cx="2169.9" cy="1634.8" r="6.2" fill="#515151" stroke="#fff" stroke-width="1.4"/><path d="M2163.7 1634.8H2176.1M2169.9 1628.6V1641M2169.9 1628.6Q2166.2 1634.8 2169.9 1641M2169.9 1628.6Q2173.6 1634.8 2169.9 1641" stroke="#fff" stroke-width="1" fill="none" /></svg>
<span class="t" style='left:56.00px;top:20.30px;font-family:"Liberation Sans", sans-serif;font-size:15px;color:#fff;letter-spacing:0.196px;'>Automatisches Speichern</span>
<span class="t" style='left:524.60px;top:18.96px;font-family:"Liberation Sans", sans-serif;font-size:17.3px;color:#fff;letter-spacing:-0.411px;'>POC_A1.docx</span>
<span class="t" style='left:1031.90px;top:19.43px;font-family:"Liberation Sans", sans-serif;font-size:17.8px;color:#3a3a3a;letter-spacing:0.131px;'>Suchen</span>
<span class="t" style='left:2220.00px;top:20.96px;font-family:"Liberation Sans", sans-serif;font-size:13.4px;color:#fff;letter-spacing:0.220px;'>NF</span>
<span class="t" style='left:8.40px;top:78.56px;font-family:"Liberation Sans", sans-serif;font-size:17.3px;color:#fff;letter-spacing:0.851px;'>Datei</span>
<span class="t" style='left:85.40px;top:78.56px;font-family:"Liberation Sans", sans-serif;font-size:17.3px;color:#fff;font-weight:700;letter-spacing:0.445px;'>Start</span>
<span class="t" style='left:158.00px;top:78.56px;font-family:"Liberation Sans", sans-serif;font-size:17.3px;color:#fff;letter-spacing:0.971px;'>Einfügen</span>
<span class="t" style='left:267.00px;top:78.56px;font-family:"Liberation Sans", sans-serif;font-size:17.3px;color:#fff;letter-spacing:0.863px;'>Zeichnen</span>
<span class="t" style='left:378.00px;top:78.56px;font-family:"Liberation Sans", sans-serif;font-size:17.3px;color:#fff;letter-spacing:1.201px;'>Entwurf</span>
<span class="t" style='left:475.00px;top:78.56px;font-family:"Liberation Sans", sans-serif;font-size:17.3px;color:#fff;letter-spacing:1.135px;'>Layout</span>
<span class="t" style='left:567.40px;top:78.56px;font-family:"Liberation Sans", sans-serif;font-size:17.3px;color:#fff;letter-spacing:0.496px;'>Referenzen</span>
<span class="t" style='left:696.00px;top:78.56px;font-family:"Liberation Sans", sans-serif;font-size:17.3px;color:#fff;letter-spacing:1.175px;'>Sendungen</span>
<span class="t" style='left:829.00px;top:78.56px;font-family:"Liberation Sans", sans-serif;font-size:17.3px;color:#fff;letter-spacing:1.353px;'>Überprüfen</span>
<span class="t" style='left:961.00px;top:78.56px;font-family:"Liberation Sans", sans-serif;font-size:17.3px;color:#fff;letter-spacing:1.018px;'>Ansicht</span>
<span class="t" style='left:1057.40px;top:78.56px;font-family:"Liberation Sans", sans-serif;font-size:17.3px;color:#fff;letter-spacing:1.090px;'>Entwicklertools</span>
<span class="t" style='left:1220.00px;top:78.56px;font-family:"Liberation Sans", sans-serif;font-size:17.3px;color:#fff;letter-spacing:1.508px;'>Zotero</span>
<span class="t" style='left:1311.00px;top:78.56px;font-family:"Liberation Sans", sans-serif;font-size:17.3px;color:#fff;letter-spacing:1.084px;'>Hilfe</span>
<span class="t" style='left:1381.00px;top:78.56px;font-family:"Liberation Sans", sans-serif;font-size:17.3px;color:#fff;letter-spacing:1.250px;'>Grammarly</span>
<span class="t" style='left:1507.00px;top:78.56px;font-family:"Liberation Sans", sans-serif;font-size:17.3px;color:#fff;letter-spacing:1.434px;'>Acrobat</span>
<span class="t" style='left:2005.80px;top:78.36px;font-family:"Liberation Sans", sans-serif;font-size:17.3px;color:#222;letter-spacing:1.306px;'>Kommentare</span>
<span class="t" style='left:2177.90px;top:78.36px;font-family:"Liberation Sans", sans-serif;font-size:17.3px;color:#222;letter-spacing:0.963px;'>Bearbeitung</span>
<span class="t" style='left:2351.70px;top:78.36px;font-family:"Liberation Sans", sans-serif;font-size:17.3px;color:#1a1a1a;letter-spacing:0.886px;'>Freigeben</span>
<span class="t" style='left:6.00px;top:261.97px;font-family:"Liberation Sans", sans-serif;font-size:14.8px;color:#2b2b2b;letter-spacing:0.290px;'>Zwischenablage</span>
<span class="t" style='left:330.00px;top:261.97px;font-family:"Liberation Sans", sans-serif;font-size:14.8px;color:#2b2b2b;letter-spacing:0.480px;'>Schriftart</span>
<span class="t" style='left:736.00px;top:261.97px;font-family:"Liberation Sans", sans-serif;font-size:14.8px;color:#2b2b2b;letter-spacing:0.125px;'>Absatz</span>
<span class="t" style='left:1163.00px;top:261.97px;font-family:"Liberation Sans", sans-serif;font-size:14.8px;color:#2b2b2b;letter-spacing:0.527px;'>Formatvorlagen</span>
<span class="t" style='left:1638.00px;top:261.97px;font-family:"Liberation Sans", sans-serif;font-size:14.8px;color:#2b2b2b;letter-spacing:0.456px;'>Adobe Acrobat</span>
<span class="t" style='left:1766.00px;top:261.97px;font-family:"Liberation Sans", sans-serif;font-size:14.8px;color:#2b2b2b;letter-spacing:0.125px;'>Sprache</span>
<span class="t" style='left:1869.50px;top:261.97px;font-family:"Liberation Sans", sans-serif;font-size:14.8px;color:#2b2b2b;letter-spacing:0.224px;'>Editor</span>
<span class="t" style='left:1959.50px;top:261.97px;font-family:"Liberation Sans", sans-serif;font-size:14.8px;color:#2b2b2b;letter-spacing:0.286px;'>Add-Ins</span>
<span class="t" style='left:2064.00px;top:261.97px;font-family:"Liberation Sans", sans-serif;font-size:14.8px;color:#2b2b2b;letter-spacing:0.425px;'>Textprüfung</span>
<span class="t" style='left:2193.50px;top:261.97px;font-family:"Liberation Sans", sans-serif;font-size:14.8px;color:#2b2b2b;letter-spacing:0.536px;'>Grammarly</span>
<span class="t" style='left:26.80px;top:192.36px;font-family:"Liberation Sans", sans-serif;font-size:17.3px;color:#2b2b2b;letter-spacing:-0.092px;'>Einfügen</span>
<span class="t" style='left:186.60px;top:127.36px;font-family:"Liberation Sans", sans-serif;font-size:17.3px;color:#2b2b2b;letter-spacing:0.047px;'>Times New Roman</span>
<span class="t" style='left:484.70px;top:127.36px;font-family:"Liberation Sans", sans-serif;font-size:17.3px;color:#2b2b2b;letter-spacing:-0.117px;'>12</span>
<span class="t" style='left:1538.85px;top:182.76px;font-family:"Liberation Sans", sans-serif;font-size:17.3px;color:#2b2b2b;letter-spacing:-0.189px;'>Bearbeiten</span>
<span class="t" style='left:1675.85px;top:185.96px;font-family:"Liberation Sans", sans-serif;font-size:17.3px;color:#2b2b2b;letter-spacing:-1.288px;'>PDF</span>
<span class="t" style='left:1658.75px;top:209.56px;font-family:"Liberation Sans", sans-serif;font-size:17.3px;color:#2b2b2b;letter-spacing:-0.203px;'>erstellen</span>
<span class="t" style='left:1761.00px;top:192.26px;font-family:"Liberation Sans", sans-serif;font-size:17.3px;color:#2b2b2b;letter-spacing:0.022px;'>Diktieren</span>
<span class="t" style='left:1868.05px;top:185.96px;font-family:"Liberation Sans", sans-serif;font-size:17.3px;color:#2b2b2b;letter-spacing:0.057px;'>Editor</span>
<span class="t" style='left:1966.40px;top:185.96px;font-family:"Liberation Sans", sans-serif;font-size:17.3px;color:#2b2b2b;letter-spacing:0.871px;'>Add-</span>
<span class="t" style='left:1975.75px;top:209.56px;font-family:"Liberation Sans", sans-serif;font-size:17.3px;color:#2b2b2b;letter-spacing:-0.587px;'>Ins</span>
<span class="t" style='left:2076.55px;top:185.96px;font-family:"Liberation Sans", sans-serif;font-size:17.3px;color:#2b2b2b;letter-spacing:0.369px;'>Duden-</span>
<span class="t" style='left:2049.20px;top:209.56px;font-family:"Liberation Sans", sans-serif;font-size:17.3px;color:#2b2b2b;letter-spacing:0.270px;'>Mentor starten</span>
<span class="t" style='left:2212.00px;top:185.96px;font-family:"Liberation Sans", sans-serif;font-size:17.3px;color:#2b2b2b;letter-spacing:0.280px;'>Open</span>
<span class="t" style='left:2191.20px;top:209.56px;font-family:"Liberation Sans", sans-serif;font-size:17.3px;color:#2b2b2b;letter-spacing:0.061px;'>Grammarly</span>
<span class="t" style='left:1018.30px;top:160.57px;font-family:"Liberation Sans", sans-serif;font-size:20px;color:#111;letter-spacing:0.529px;'>Standard</span>
<span class="t" style='left:1155.10px;top:160.57px;font-family:"Liberation Sans", sans-serif;font-size:20px;color:#111;letter-spacing:0.286px;'>Kein Leerraum</span>
<span class="t" style='left:524.20px;top:479.72px;font-family:"Liberation Serif", serif;font-size:19.44px;color:#000;font-weight:700;letter-spacing:-0.060px;'>Projekt 1</span>
<span class="t" style='left:368.60px;top:936.13px;font-family:"Liberation Serif", serif;font-size:17.28px;color:#000;font-weight:700;letter-spacing:0.012px;'>Methoden der empirischen Kommunikationsforschung:</span>
<span class="t" style='left:546.80px;top:966.03px;font-family:"Liberation Serif", serif;font-size:17.28px;color:#000;font-weight:700;letter-spacing:-0.079px;'>Aufbau</span>
<span class="t" style='left:493.60px;top:1033.53px;font-family:"Liberation Serif", serif;font-size:17.28px;color:#000;font-weight:700;letter-spacing:0.009px;'>Forschungsbericht</span>
<span class="t" style='left:491.90px;top:1086.95px;font-family:"Liberation Serif", serif;font-size:12.96px;color:#000;letter-spacing:0.030px;'>Name: Nils Fabian Schmid</span>
<span class="t" style='left:320.50px;top:1109.05px;font-family:"Liberation Serif", serif;font-size:12.96px;color:#000;letter-spacing:0.003px;'>Matriculation Number: 24–700–502</span>
<span class="t" style='left:703.90px;top:1109.05px;font-family:"Liberation Serif", serif;font-size:12.96px;color:#000;letter-spacing:-0.011px;'>Datum: 25.10.2024</span>
<span class="t" style='left:1817.15px;top:420.53px;font-family:"Liberation Serif", serif;font-size:17.28px;color:#000;letter-spacing:0.023px;'>Table of Contents</span>
<span class="t" style='left:317.70px;top:1341.21px;font-family:"Liberation Serif", serif;font-size:21.6px;color:#0f4761;letter-spacing:-0.003px;'>1  Visualisation 1</span>
<span class="t" style='left:317.70px;top:1386.63px;font-family:"Liberation Serif", serif;font-size:17.28px;color:#0f4761;letter-spacing:-0.013px;'>1.1  Description Visualisation 1</span>
<span class="t" style='left:975.40px;top:1300.83px;font-family:"Liberation Serif", serif;font-size:17.28px;color:#0f4761;letter-spacing:0.037px;'>1.2  Analysis Visualisation 1</span>
<span class="t" style='left:975.40px;top:1339.64px;font-family:"Liberation Serif", serif;font-size:15.12px;color:#0f4761;letter-spacing:0.061px;'>1.2.1  Principles of Design</span>
<span class="t" style='left:1749.90px;top:1562.49px;font-family:"Liberation Sans", sans-serif;font-size:9.7px;color:#0e2841;font-style:italic;letter-spacing:-0.076px;'>Figure 2 95% prediction interval cutting off almost the legend</span>
<span class="t" style='left:540.60px;top:402.80px;font-family:"Liberation Sans", sans-serif;font-size:15px;color:#111;font-weight:700;transform:scaleX(1.0533);transform-origin:0 0;'>University of</span>
<span class="t" style='left:540.60px;top:421.80px;font-family:"Liberation Sans", sans-serif;font-size:15px;color:#111;font-weight:700;transform:scaleX(0.9947);transform-origin:0 0;'>Zurich</span>
<span class="t" style='left:588.20px;top:422.61px;font-family:"Liberation Sans", sans-serif;font-size:4.6px;color:#111;font-weight:700;transform:scaleX(1.2483);transform-origin:0 0;'>UZH</span>
<span class="t" style='left:2005.30px;top:1294.79px;font-family:"Liberation Sans", sans-serif;font-size:19.5px;color:#111;transform:scaleX(0.8417);transform-origin:0 0;'>Year of birth</span>
<span class="t" style='left:1788.40px;top:1337.47px;font-family:"Liberation Sans", sans-serif;font-size:20px;color:#111;transform:scaleX(0.8830);transform-origin:0 0;'>Female</span>
<span class="t" style='left:1851.00px;top:1378.92px;font-family:"Liberation Sans", sans-serif;font-size:19px;color:#111;transform:scaleX(0.8183);transform-origin:0 0;'>median</span>
<span class="t" style='left:1851.00px;top:1395.52px;font-family:"Liberation Sans", sans-serif;font-size:19px;color:#111;transform:scaleX(0.8501);transform-origin:0 0;'>80% prediction interval</span>
<span class="t" style='left:1851.00px;top:1411.92px;font-family:"Liberation Sans", sans-serif;font-size:19px;color:#111;transform:scaleX(0.8501);transform-origin:0 0;'>95% prediction interval</span>
<span class="t" style='left:2042.80px;top:1323.72px;font-family:"Liberation Sans", sans-serif;font-size:19px;color:#111;transform:scaleX(0.8089);transform-origin:0 0;'>1990</span>
<span class="t" style='left:2042.80px;top:1352.14px;font-family:"Liberation Sans", sans-serif;font-size:19px;color:#111;transform:scaleX(0.8089);transform-origin:0 0;'>1995</span>
<span class="t" style='left:2042.80px;top:1380.56px;font-family:"Liberation Sans", sans-serif;font-size:19px;color:#111;transform:scaleX(0.8089);transform-origin:0 0;'>2000</span>
<span class="t" style='left:2042.80px;top:1408.98px;font-family:"Liberation Sans", sans-serif;font-size:19px;color:#111;transform:scaleX(0.8089);transform-origin:0 0;'>2005</span>
<span class="t" style='left:2042.80px;top:1437.40px;font-family:"Liberation Sans", sans-serif;font-size:19px;color:#111;transform:scaleX(0.8089);transform-origin:0 0;'>2010</span>
<span class="t" style='left:2042.80px;top:1465.82px;font-family:"Liberation Sans", sans-serif;font-size:19px;color:#111;transform:scaleX(0.8089);transform-origin:0 0;'>2015</span>
<span class="t" style='left:2042.80px;top:1494.24px;font-family:"Liberation Sans", sans-serif;font-size:19px;color:#111;transform:scaleX(0.8089);transform-origin:0 0;'>2020</span>
<span class="t" style='left:2042.80px;top:1522.66px;font-family:"Liberation Sans", sans-serif;font-size:19px;color:#111;transform:scaleX(0.8089);transform-origin:0 0;'>2025</span>
<span class="t" style='left:11.20px;top:1622.89px;font-family:"Liberation Sans", sans-serif;font-size:14.9px;color:#f0f0f0;letter-spacing:0.213px;'>Seite 1 von 15</span>
<span class="t" style='left:156.30px;top:1622.89px;font-family:"Liberation Sans", sans-serif;font-size:14.9px;color:#f0f0f0;letter-spacing:0.615px;'>3575 Wörter</span>
<span class="t" style='left:355.00px;top:1622.89px;font-family:"Liberation Sans", sans-serif;font-size:14.9px;color:#f0f0f0;letter-spacing:0.257px;'>Englisch (Vereinigtes Königreich)</span>
<span class="t" style='left:626.00px;top:1622.89px;font-family:"Liberation Sans", sans-serif;font-size:14.9px;color:#f0f0f0;letter-spacing:0.118px;'>Textvorhersagen: ein</span>
<span class="t" style='left:906.00px;top:1622.89px;font-family:"Liberation Sans", sans-serif;font-size:14.9px;color:#f0f0f0;font-weight:700;letter-spacing:0.469px;'>Barrierefreiheit: Untersuchen</span>
<span class="t" style='left:1944.70px;top:1623.29px;font-family:"Liberation Sans", sans-serif;font-size:14.9px;color:#f0f0f0;letter-spacing:-0.233px;'>Fokus</span>
<span class="t" style='left:2420.50px;top:1622.89px;font-family:"Liberation Sans", sans-serif;font-size:14.9px;color:#f0f0f0;letter-spacing:0.163px;'>54%</span>
<span class="t" style='left:2206.03px;top:1621.61px;font-family:"Liberation Sans", sans-serif;font-size:17px;color:#f0f0f0;'>−</span>
<span class="t" style='left:2380.95px;top:1620.92px;font-family:"Liberation Sans", sans-serif;font-size:19px;color:#f0f0f0;'>+</span>
</body></html>
